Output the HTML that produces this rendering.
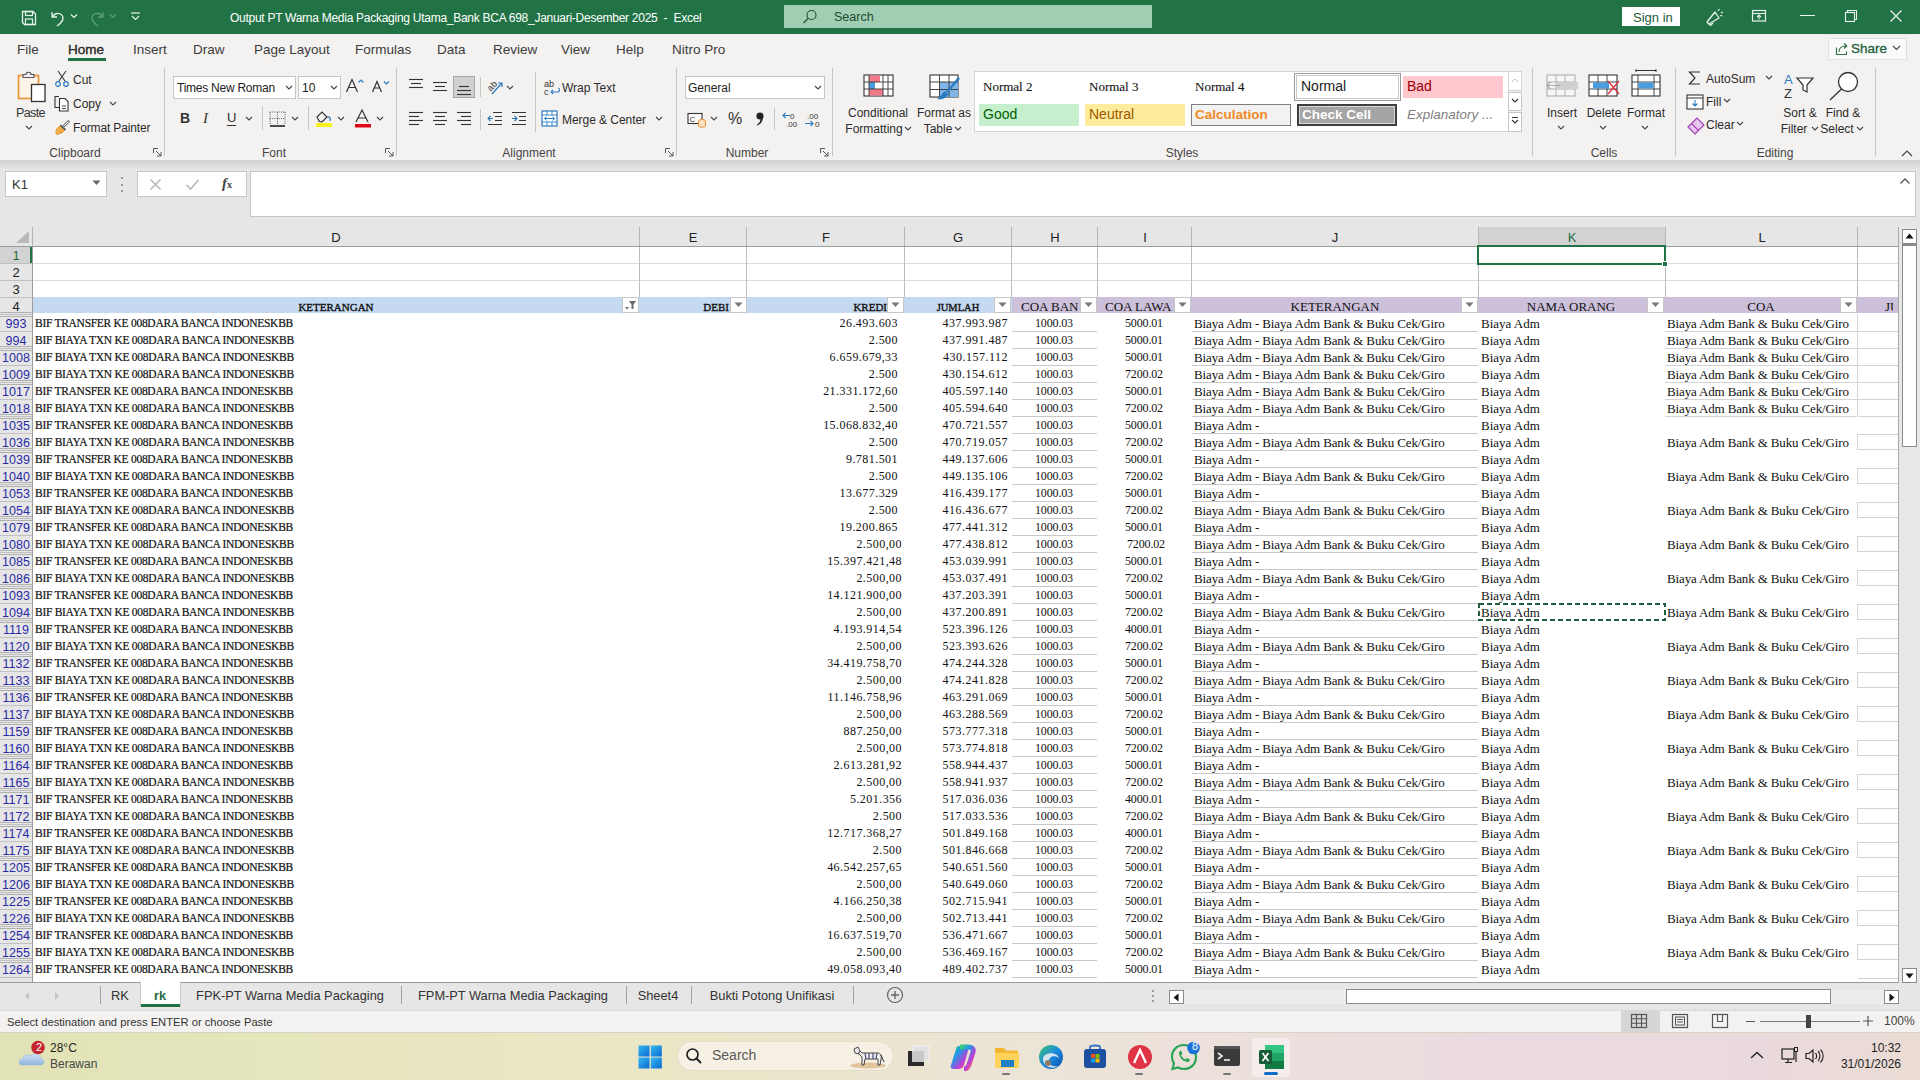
<!DOCTYPE html><html><head><meta charset="utf-8"><style>
*{margin:0;padding:0;box-sizing:border-box}
html,body{width:1920px;height:1080px;overflow:hidden;background:#fff;position:relative}
body{font-family:"Liberation Sans",sans-serif;color:#262626}
.ui{font-family:"Liberation Sans",sans-serif;font-size:14px;line-height:16px;color:#333}
.sm{font-family:"Liberation Sans",sans-serif;font-size:13px;line-height:15px;color:#333}
.ser{font-family:"Liberation Serif",serif;font-size:13px;line-height:15px;color:#000}
</style></head><body><div style="position:absolute;left:0px;top:0px;width:1920px;height:34px;background:#217346"></div>
<div style="position:absolute;left:0px;top:34px;width:1920px;height:126px;background:#f4f2f1"></div>
<div style="position:absolute;left:0px;top:160px;width:1920px;height:67px;background:#e6e6e6"></div>
<div style="position:absolute;left:0px;top:227px;width:1920px;height:20px;background:#e6e6e6"></div>
<div style="position:absolute;left:0px;top:247px;width:1898px;height:736px;background:#fff"></div>
<div style="position:absolute;left:0px;top:982px;width:1920px;height:28px;background:#f0f0f0"></div>
<div style="position:absolute;left:0px;top:1010px;width:1920px;height:23px;background:#f3f2f1"></div>
<div style="position:absolute;left:0px;top:1032px;width:1920px;height:48px;background:linear-gradient(90deg,#e1e3b6 0%,#e6e6bd 15%,#ebe6c6 35%,#ece4d8 55%,#ebdae0 78%,#ead9dc 92%,#eadcd4 100%)"></div>
<div style="position:absolute;left:639px;top:227px;width:1px;height:20px;background:#b6b6b6"></div>
<div style="position:absolute;left:36px;width:600px;text-align:center;top:230px;white-space:nowrap;font-size:13px;line-height:16px;color:#222">D</div>
<div style="position:absolute;left:746px;top:227px;width:1px;height:20px;background:#b6b6b6"></div>
<div style="position:absolute;left:393px;width:600px;text-align:center;top:230px;white-space:nowrap;font-size:13px;line-height:16px;color:#222">E</div>
<div style="position:absolute;left:904px;top:227px;width:1px;height:20px;background:#b6b6b6"></div>
<div style="position:absolute;left:526px;width:600px;text-align:center;top:230px;white-space:nowrap;font-size:13px;line-height:16px;color:#222">F</div>
<div style="position:absolute;left:1011px;top:227px;width:1px;height:20px;background:#b6b6b6"></div>
<div style="position:absolute;left:658px;width:600px;text-align:center;top:230px;white-space:nowrap;font-size:13px;line-height:16px;color:#222">G</div>
<div style="position:absolute;left:1097px;top:227px;width:1px;height:20px;background:#b6b6b6"></div>
<div style="position:absolute;left:755px;width:600px;text-align:center;top:230px;white-space:nowrap;font-size:13px;line-height:16px;color:#222">H</div>
<div style="position:absolute;left:1191px;top:227px;width:1px;height:20px;background:#b6b6b6"></div>
<div style="position:absolute;left:845px;width:600px;text-align:center;top:230px;white-space:nowrap;font-size:13px;line-height:16px;color:#222">I</div>
<div style="position:absolute;left:1478px;top:227px;width:1px;height:20px;background:#b6b6b6"></div>
<div style="position:absolute;left:1035px;width:600px;text-align:center;top:230px;white-space:nowrap;font-size:13px;line-height:16px;color:#222">J</div>
<div style="position:absolute;left:1665px;top:227px;width:1px;height:20px;background:#b6b6b6"></div>
<div style="position:absolute;left:1479px;top:227px;width:186px;height:19px;background:#d2d2d2"></div>
<div style="position:absolute;left:1272px;width:600px;text-align:center;top:230px;white-space:nowrap;font-size:13px;line-height:16px;color:#1e6b41">K</div>
<div style="position:absolute;left:1857px;top:227px;width:1px;height:20px;background:#b6b6b6"></div>
<div style="position:absolute;left:1462px;width:600px;text-align:center;top:230px;white-space:nowrap;font-size:13px;line-height:16px;color:#222">L</div>
<div style="position:absolute;left:1898px;top:227px;width:1px;height:20px;background:#b6b6b6"></div>
<svg style="position:absolute;left:14px;top:230px;" width="16" height="14" viewBox="0 0 16 14"><path d="M15 1 L15 13 L2 13 Z" fill="#b9b9b9"/></svg>
<div style="position:absolute;left:32px;top:227px;width:1px;height:20px;background:#b6b6b6"></div>
<div style="position:absolute;left:0px;top:246px;width:1898px;height:1px;background:#9c9c9c"></div>
<div style="position:absolute;left:1478px;top:245px;width:187px;height:2px;background:#217346"></div>
<div style="position:absolute;left:0px;top:247px;width:32px;height:736px;background:#e6e6e6"></div>
<div style="position:absolute;left:32px;top:247px;width:1px;height:736px;background:#9c9c9c"></div>
<div style="position:absolute;left:0px;top:247px;width:32px;height:16px;background:#d2d2d2"></div>
<div style="position:absolute;left:30px;top:247px;width:2px;height:17px;background:#217346"></div>
<div style="position:absolute;left:0px;top:263px;width:32px;height:1px;background:#c0c0c0"></div>
<div style="position:absolute;left:-284px;width:600px;text-align:center;top:248px;white-space:nowrap;font-size:13px;line-height:16px;color:#1e6b41">1</div>
<div style="position:absolute;left:33px;top:263px;width:1865px;height:1px;background:#dadcdd"></div>
<div style="position:absolute;left:0px;top:280px;width:32px;height:1px;background:#c0c0c0"></div>
<div style="position:absolute;left:-284px;width:600px;text-align:center;top:265px;white-space:nowrap;font-size:13px;line-height:16px;color:#222">2</div>
<div style="position:absolute;left:33px;top:280px;width:1865px;height:1px;background:#dadcdd"></div>
<div style="position:absolute;left:0px;top:297px;width:32px;height:1px;background:#c0c0c0"></div>
<div style="position:absolute;left:-284px;width:600px;text-align:center;top:282px;white-space:nowrap;font-size:13px;line-height:16px;color:#222">3</div>
<div style="position:absolute;left:33px;top:297px;width:1865px;height:1px;background:#dadcdd"></div>
<div style="position:absolute;left:0px;top:314px;width:32px;height:1px;background:#c0c0c0"></div>
<div style="position:absolute;left:-284px;width:600px;text-align:center;top:299px;white-space:nowrap;font-size:13px;line-height:16px;color:#222">4</div>
<div style="position:absolute;left:639px;top:247px;width:1px;height:50px;background:#bcbcbc"></div>
<div style="position:absolute;left:746px;top:247px;width:1px;height:50px;background:#bcbcbc"></div>
<div style="position:absolute;left:904px;top:247px;width:1px;height:50px;background:#bcbcbc"></div>
<div style="position:absolute;left:1011px;top:247px;width:1px;height:50px;background:#bcbcbc"></div>
<div style="position:absolute;left:1097px;top:247px;width:1px;height:50px;background:#bcbcbc"></div>
<div style="position:absolute;left:1191px;top:247px;width:1px;height:50px;background:#bcbcbc"></div>
<div style="position:absolute;left:1478px;top:247px;width:1px;height:50px;background:#bcbcbc"></div>
<div style="position:absolute;left:1665px;top:247px;width:1px;height:50px;background:#bcbcbc"></div>
<div style="position:absolute;left:1857px;top:247px;width:1px;height:50px;background:#bcbcbc"></div>
<div style="position:absolute;left:1898px;top:247px;width:1px;height:50px;background:#bcbcbc"></div>
<div style="position:absolute;left:33px;top:297px;width:872px;height:16px;background:#c5d9f1"></div>
<div style="position:absolute;left:905px;top:297px;width:993px;height:16px;background:#ccc0da"></div>
<div style="position:absolute;left:905px;top:297px;width:106px;height:16px;background:#c5d9f1"></div>
<div style="position:absolute;left:33px;top:297px;width:979px;height:16px;background:#c5d9f1"></div>
<div style="position:absolute;left:1012px;top:297px;width:886px;height:16px;background:#ccc0da"></div>
<div style="position:absolute;left:0px;top:312px;width:32px;height:1px;background:#b0b0b0"></div>
<div style="position:absolute;left:0px;top:316px;width:32px;height:1px;background:#b0b0b0"></div>
<div style="position:absolute;left:0px;top:331px;width:32px;height:1px;background:#c0c0c0"></div>
<div style="position:absolute;left:-284px;width:600px;text-align:center;top:316px;white-space:nowrap;font-size:12.5px;line-height:16px;color:#2a2aa8">993</div>
<div style="position:absolute;left:35px;top:316px;white-space:nowrap;font-family:'Liberation Serif',serif;font-size:12px;line-height:15px;color:#111;font-size:11.5px;letter-spacing:-0.28px;-webkit-text-stroke:0.2px #111">BIF TRANSFER KE 008DARA BANCA INDONESKBB</div>
<div style="position:absolute;left:298px;width:600px;text-align:right;top:316px;white-space:nowrap;font-family:'Liberation Serif',serif;font-size:12px;line-height:15px;color:#111;letter-spacing:0.45px">26.493.603</div>
<div style="position:absolute;left:408px;width:600px;text-align:right;top:316px;white-space:nowrap;font-family:'Liberation Serif',serif;font-size:12px;line-height:15px;color:#111;letter-spacing:0.5px">437.993.987</div>
<div style="position:absolute;left:754px;width:600px;text-align:center;top:316px;white-space:nowrap;font-family:'Liberation Serif',serif;font-size:13px;line-height:15px;color:#111;font-size:12px;letter-spacing:-0.15px">1000.03</div>
<div style="position:absolute;left:844px;width:600px;text-align:center;top:316px;white-space:nowrap;font-family:'Liberation Serif',serif;font-size:13px;line-height:15px;color:#111;font-size:12px;letter-spacing:-0.15px">5000.01</div>
<div style="position:absolute;left:1194px;top:316px;white-space:nowrap;font-family:'Liberation Serif',serif;font-size:13px;line-height:15px;color:#111;letter-spacing:-0.12px">Biaya Adm - Biaya Adm Bank &amp; Buku Cek/Giro</div>
<div style="position:absolute;left:1481px;top:316px;white-space:nowrap;font-family:'Liberation Serif',serif;font-size:13px;line-height:15px;color:#111;">Biaya Adm</div>
<div style="position:absolute;left:1667px;top:316px;white-space:nowrap;font-family:'Liberation Serif',serif;font-size:13px;line-height:15px;color:#111;letter-spacing:-0.14px">Biaya Adm Bank &amp; Buku Cek/Giro</div>
<div style="position:absolute;left:1012px;top:331px;width:85px;height:1px;background:#c8c8c8"></div>
<div style="position:absolute;left:1192px;top:331px;width:286px;height:1px;background:#c8c8c8"></div>
<div style="position:absolute;left:1665px;top:331px;width:192px;height:1px;background:#d4d4d4"></div>
<div style="position:absolute;left:1857px;top:314px;width:1px;height:17px;background:#d4d4d4"></div>
<div style="position:absolute;left:1858px;top:331px;width:40px;height:1px;background:#d4d4d4"></div>
<div style="position:absolute;left:0px;top:348px;width:32px;height:1px;background:#c0c0c0"></div>
<div style="position:absolute;left:-284px;width:600px;text-align:center;top:333px;white-space:nowrap;font-size:12.5px;line-height:16px;color:#2a2aa8">994</div>
<div style="position:absolute;left:35px;top:333px;white-space:nowrap;font-family:'Liberation Serif',serif;font-size:12px;line-height:15px;color:#111;font-size:11.5px;letter-spacing:-0.28px;-webkit-text-stroke:0.2px #111">BIF BIAYA TXN KE 008DARA BANCA INDONESKBB</div>
<div style="position:absolute;left:298px;width:600px;text-align:right;top:333px;white-space:nowrap;font-family:'Liberation Serif',serif;font-size:12px;line-height:15px;color:#111;letter-spacing:0.45px">2.500</div>
<div style="position:absolute;left:408px;width:600px;text-align:right;top:333px;white-space:nowrap;font-family:'Liberation Serif',serif;font-size:12px;line-height:15px;color:#111;letter-spacing:0.5px">437.991.487</div>
<div style="position:absolute;left:754px;width:600px;text-align:center;top:333px;white-space:nowrap;font-family:'Liberation Serif',serif;font-size:13px;line-height:15px;color:#111;font-size:12px;letter-spacing:-0.15px">1000.03</div>
<div style="position:absolute;left:844px;width:600px;text-align:center;top:333px;white-space:nowrap;font-family:'Liberation Serif',serif;font-size:13px;line-height:15px;color:#111;font-size:12px;letter-spacing:-0.15px">5000.01</div>
<div style="position:absolute;left:1194px;top:333px;white-space:nowrap;font-family:'Liberation Serif',serif;font-size:13px;line-height:15px;color:#111;letter-spacing:-0.12px">Biaya Adm - Biaya Adm Bank &amp; Buku Cek/Giro</div>
<div style="position:absolute;left:1481px;top:333px;white-space:nowrap;font-family:'Liberation Serif',serif;font-size:13px;line-height:15px;color:#111;">Biaya Adm</div>
<div style="position:absolute;left:1667px;top:333px;white-space:nowrap;font-family:'Liberation Serif',serif;font-size:13px;line-height:15px;color:#111;letter-spacing:-0.14px">Biaya Adm Bank &amp; Buku Cek/Giro</div>
<div style="position:absolute;left:1012px;top:348px;width:85px;height:1px;background:#c8c8c8"></div>
<div style="position:absolute;left:1192px;top:348px;width:286px;height:1px;background:#c8c8c8"></div>
<div style="position:absolute;left:1665px;top:348px;width:192px;height:1px;background:#d4d4d4"></div>
<div style="position:absolute;left:1857px;top:331px;width:1px;height:17px;background:#d4d4d4"></div>
<div style="position:absolute;left:1858px;top:348px;width:40px;height:1px;background:#d4d4d4"></div>
<div style="position:absolute;left:0px;top:346px;width:32px;height:1px;background:#b0b0b0"></div>
<div style="position:absolute;left:0px;top:350px;width:32px;height:1px;background:#b0b0b0"></div>
<div style="position:absolute;left:0px;top:365px;width:32px;height:1px;background:#c0c0c0"></div>
<div style="position:absolute;left:-284px;width:600px;text-align:center;top:350px;white-space:nowrap;font-size:12.5px;line-height:16px;color:#2a2aa8">1008</div>
<div style="position:absolute;left:35px;top:350px;white-space:nowrap;font-family:'Liberation Serif',serif;font-size:12px;line-height:15px;color:#111;font-size:11.5px;letter-spacing:-0.28px;-webkit-text-stroke:0.2px #111">BIF BIAYA TXN KE 008DARA BANCA INDONESKBB</div>
<div style="position:absolute;left:298px;width:600px;text-align:right;top:350px;white-space:nowrap;font-family:'Liberation Serif',serif;font-size:12px;line-height:15px;color:#111;letter-spacing:0.45px">6.659.679,33</div>
<div style="position:absolute;left:408px;width:600px;text-align:right;top:350px;white-space:nowrap;font-family:'Liberation Serif',serif;font-size:12px;line-height:15px;color:#111;letter-spacing:0.5px">430.157.112</div>
<div style="position:absolute;left:754px;width:600px;text-align:center;top:350px;white-space:nowrap;font-family:'Liberation Serif',serif;font-size:13px;line-height:15px;color:#111;font-size:12px;letter-spacing:-0.15px">1000.03</div>
<div style="position:absolute;left:844px;width:600px;text-align:center;top:350px;white-space:nowrap;font-family:'Liberation Serif',serif;font-size:13px;line-height:15px;color:#111;font-size:12px;letter-spacing:-0.15px">5000.01</div>
<div style="position:absolute;left:1194px;top:350px;white-space:nowrap;font-family:'Liberation Serif',serif;font-size:13px;line-height:15px;color:#111;letter-spacing:-0.12px">Biaya Adm - Biaya Adm Bank &amp; Buku Cek/Giro</div>
<div style="position:absolute;left:1481px;top:350px;white-space:nowrap;font-family:'Liberation Serif',serif;font-size:13px;line-height:15px;color:#111;">Biaya Adm</div>
<div style="position:absolute;left:1667px;top:350px;white-space:nowrap;font-family:'Liberation Serif',serif;font-size:13px;line-height:15px;color:#111;letter-spacing:-0.14px">Biaya Adm Bank &amp; Buku Cek/Giro</div>
<div style="position:absolute;left:1012px;top:365px;width:85px;height:1px;background:#c8c8c8"></div>
<div style="position:absolute;left:1192px;top:365px;width:286px;height:1px;background:#c8c8c8"></div>
<div style="position:absolute;left:1665px;top:365px;width:192px;height:1px;background:#d4d4d4"></div>
<div style="position:absolute;left:1857px;top:348px;width:1px;height:17px;background:#d4d4d4"></div>
<div style="position:absolute;left:1858px;top:365px;width:40px;height:1px;background:#d4d4d4"></div>
<div style="position:absolute;left:0px;top:382px;width:32px;height:1px;background:#c0c0c0"></div>
<div style="position:absolute;left:-284px;width:600px;text-align:center;top:367px;white-space:nowrap;font-size:12.5px;line-height:16px;color:#2a2aa8">1009</div>
<div style="position:absolute;left:35px;top:367px;white-space:nowrap;font-family:'Liberation Serif',serif;font-size:12px;line-height:15px;color:#111;font-size:11.5px;letter-spacing:-0.28px;-webkit-text-stroke:0.2px #111">BIF BIAYA TXN KE 008DARA BANCA INDONESKBB</div>
<div style="position:absolute;left:298px;width:600px;text-align:right;top:367px;white-space:nowrap;font-family:'Liberation Serif',serif;font-size:12px;line-height:15px;color:#111;letter-spacing:0.45px">2.500</div>
<div style="position:absolute;left:408px;width:600px;text-align:right;top:367px;white-space:nowrap;font-family:'Liberation Serif',serif;font-size:12px;line-height:15px;color:#111;letter-spacing:0.5px">430.154.612</div>
<div style="position:absolute;left:754px;width:600px;text-align:center;top:367px;white-space:nowrap;font-family:'Liberation Serif',serif;font-size:13px;line-height:15px;color:#111;font-size:12px;letter-spacing:-0.15px">1000.03</div>
<div style="position:absolute;left:844px;width:600px;text-align:center;top:367px;white-space:nowrap;font-family:'Liberation Serif',serif;font-size:13px;line-height:15px;color:#111;font-size:12px;letter-spacing:-0.15px">7200.02</div>
<div style="position:absolute;left:1194px;top:367px;white-space:nowrap;font-family:'Liberation Serif',serif;font-size:13px;line-height:15px;color:#111;letter-spacing:-0.12px">Biaya Adm - Biaya Adm Bank &amp; Buku Cek/Giro</div>
<div style="position:absolute;left:1481px;top:367px;white-space:nowrap;font-family:'Liberation Serif',serif;font-size:13px;line-height:15px;color:#111;">Biaya Adm</div>
<div style="position:absolute;left:1667px;top:367px;white-space:nowrap;font-family:'Liberation Serif',serif;font-size:13px;line-height:15px;color:#111;letter-spacing:-0.14px">Biaya Adm Bank &amp; Buku Cek/Giro</div>
<div style="position:absolute;left:1012px;top:382px;width:85px;height:1px;background:#c8c8c8"></div>
<div style="position:absolute;left:1192px;top:382px;width:286px;height:1px;background:#c8c8c8"></div>
<div style="position:absolute;left:1665px;top:382px;width:192px;height:1px;background:#d4d4d4"></div>
<div style="position:absolute;left:1857px;top:365px;width:1px;height:17px;background:#d4d4d4"></div>
<div style="position:absolute;left:1858px;top:382px;width:40px;height:1px;background:#d4d4d4"></div>
<div style="position:absolute;left:0px;top:380px;width:32px;height:1px;background:#b0b0b0"></div>
<div style="position:absolute;left:0px;top:384px;width:32px;height:1px;background:#b0b0b0"></div>
<div style="position:absolute;left:0px;top:399px;width:32px;height:1px;background:#c0c0c0"></div>
<div style="position:absolute;left:-284px;width:600px;text-align:center;top:384px;white-space:nowrap;font-size:12.5px;line-height:16px;color:#2a2aa8">1017</div>
<div style="position:absolute;left:35px;top:384px;white-space:nowrap;font-family:'Liberation Serif',serif;font-size:12px;line-height:15px;color:#111;font-size:11.5px;letter-spacing:-0.28px;-webkit-text-stroke:0.2px #111">BIF TRANSFER KE 008DARA BANCA INDONESKBB</div>
<div style="position:absolute;left:298px;width:600px;text-align:right;top:384px;white-space:nowrap;font-family:'Liberation Serif',serif;font-size:12px;line-height:15px;color:#111;letter-spacing:0.45px">21.331.172,60</div>
<div style="position:absolute;left:408px;width:600px;text-align:right;top:384px;white-space:nowrap;font-family:'Liberation Serif',serif;font-size:12px;line-height:15px;color:#111;letter-spacing:0.5px">405.597.140</div>
<div style="position:absolute;left:754px;width:600px;text-align:center;top:384px;white-space:nowrap;font-family:'Liberation Serif',serif;font-size:13px;line-height:15px;color:#111;font-size:12px;letter-spacing:-0.15px">1000.03</div>
<div style="position:absolute;left:844px;width:600px;text-align:center;top:384px;white-space:nowrap;font-family:'Liberation Serif',serif;font-size:13px;line-height:15px;color:#111;font-size:12px;letter-spacing:-0.15px">5000.01</div>
<div style="position:absolute;left:1194px;top:384px;white-space:nowrap;font-family:'Liberation Serif',serif;font-size:13px;line-height:15px;color:#111;letter-spacing:-0.12px">Biaya Adm - Biaya Adm Bank &amp; Buku Cek/Giro</div>
<div style="position:absolute;left:1481px;top:384px;white-space:nowrap;font-family:'Liberation Serif',serif;font-size:13px;line-height:15px;color:#111;">Biaya Adm</div>
<div style="position:absolute;left:1667px;top:384px;white-space:nowrap;font-family:'Liberation Serif',serif;font-size:13px;line-height:15px;color:#111;letter-spacing:-0.14px">Biaya Adm Bank &amp; Buku Cek/Giro</div>
<div style="position:absolute;left:1012px;top:399px;width:85px;height:1px;background:#c8c8c8"></div>
<div style="position:absolute;left:1192px;top:399px;width:286px;height:1px;background:#c8c8c8"></div>
<div style="position:absolute;left:1665px;top:399px;width:192px;height:1px;background:#d4d4d4"></div>
<div style="position:absolute;left:1857px;top:382px;width:1px;height:17px;background:#d4d4d4"></div>
<div style="position:absolute;left:1858px;top:399px;width:40px;height:1px;background:#d4d4d4"></div>
<div style="position:absolute;left:0px;top:416px;width:32px;height:1px;background:#c0c0c0"></div>
<div style="position:absolute;left:-284px;width:600px;text-align:center;top:401px;white-space:nowrap;font-size:12.5px;line-height:16px;color:#2a2aa8">1018</div>
<div style="position:absolute;left:35px;top:401px;white-space:nowrap;font-family:'Liberation Serif',serif;font-size:12px;line-height:15px;color:#111;font-size:11.5px;letter-spacing:-0.28px;-webkit-text-stroke:0.2px #111">BIF BIAYA TXN KE 008DARA BANCA INDONESKBB</div>
<div style="position:absolute;left:298px;width:600px;text-align:right;top:401px;white-space:nowrap;font-family:'Liberation Serif',serif;font-size:12px;line-height:15px;color:#111;letter-spacing:0.45px">2.500</div>
<div style="position:absolute;left:408px;width:600px;text-align:right;top:401px;white-space:nowrap;font-family:'Liberation Serif',serif;font-size:12px;line-height:15px;color:#111;letter-spacing:0.5px">405.594.640</div>
<div style="position:absolute;left:754px;width:600px;text-align:center;top:401px;white-space:nowrap;font-family:'Liberation Serif',serif;font-size:13px;line-height:15px;color:#111;font-size:12px;letter-spacing:-0.15px">1000.03</div>
<div style="position:absolute;left:844px;width:600px;text-align:center;top:401px;white-space:nowrap;font-family:'Liberation Serif',serif;font-size:13px;line-height:15px;color:#111;font-size:12px;letter-spacing:-0.15px">7200.02</div>
<div style="position:absolute;left:1194px;top:401px;white-space:nowrap;font-family:'Liberation Serif',serif;font-size:13px;line-height:15px;color:#111;letter-spacing:-0.12px">Biaya Adm - Biaya Adm Bank &amp; Buku Cek/Giro</div>
<div style="position:absolute;left:1481px;top:401px;white-space:nowrap;font-family:'Liberation Serif',serif;font-size:13px;line-height:15px;color:#111;">Biaya Adm</div>
<div style="position:absolute;left:1667px;top:401px;white-space:nowrap;font-family:'Liberation Serif',serif;font-size:13px;line-height:15px;color:#111;letter-spacing:-0.14px">Biaya Adm Bank &amp; Buku Cek/Giro</div>
<div style="position:absolute;left:1012px;top:416px;width:85px;height:1px;background:#c8c8c8"></div>
<div style="position:absolute;left:1192px;top:416px;width:286px;height:1px;background:#c8c8c8"></div>
<div style="position:absolute;left:1665px;top:416px;width:192px;height:1px;background:#d4d4d4"></div>
<div style="position:absolute;left:1857px;top:399px;width:1px;height:17px;background:#d4d4d4"></div>
<div style="position:absolute;left:1858px;top:416px;width:40px;height:1px;background:#d4d4d4"></div>
<div style="position:absolute;left:0px;top:414px;width:32px;height:1px;background:#b0b0b0"></div>
<div style="position:absolute;left:0px;top:418px;width:32px;height:1px;background:#b0b0b0"></div>
<div style="position:absolute;left:0px;top:433px;width:32px;height:1px;background:#c0c0c0"></div>
<div style="position:absolute;left:-284px;width:600px;text-align:center;top:418px;white-space:nowrap;font-size:12.5px;line-height:16px;color:#2a2aa8">1035</div>
<div style="position:absolute;left:35px;top:418px;white-space:nowrap;font-family:'Liberation Serif',serif;font-size:12px;line-height:15px;color:#111;font-size:11.5px;letter-spacing:-0.28px;-webkit-text-stroke:0.2px #111">BIF TRANSFER KE 008DARA BANCA INDONESKBB</div>
<div style="position:absolute;left:298px;width:600px;text-align:right;top:418px;white-space:nowrap;font-family:'Liberation Serif',serif;font-size:12px;line-height:15px;color:#111;letter-spacing:0.45px">15.068.832,40</div>
<div style="position:absolute;left:408px;width:600px;text-align:right;top:418px;white-space:nowrap;font-family:'Liberation Serif',serif;font-size:12px;line-height:15px;color:#111;letter-spacing:0.5px">470.721.557</div>
<div style="position:absolute;left:754px;width:600px;text-align:center;top:418px;white-space:nowrap;font-family:'Liberation Serif',serif;font-size:13px;line-height:15px;color:#111;font-size:12px;letter-spacing:-0.15px">1000.03</div>
<div style="position:absolute;left:844px;width:600px;text-align:center;top:418px;white-space:nowrap;font-family:'Liberation Serif',serif;font-size:13px;line-height:15px;color:#111;font-size:12px;letter-spacing:-0.15px">5000.01</div>
<div style="position:absolute;left:1194px;top:418px;white-space:nowrap;font-family:'Liberation Serif',serif;font-size:13px;line-height:15px;color:#111;letter-spacing:-0.12px">Biaya Adm -</div>
<div style="position:absolute;left:1481px;top:418px;white-space:nowrap;font-family:'Liberation Serif',serif;font-size:13px;line-height:15px;color:#111;">Biaya Adm</div>
<div style="position:absolute;left:1012px;top:433px;width:85px;height:1px;background:#c8c8c8"></div>
<div style="position:absolute;left:1192px;top:433px;width:286px;height:1px;background:#c8c8c8"></div>
<div style="position:absolute;left:0px;top:450px;width:32px;height:1px;background:#c0c0c0"></div>
<div style="position:absolute;left:-284px;width:600px;text-align:center;top:435px;white-space:nowrap;font-size:12.5px;line-height:16px;color:#2a2aa8">1036</div>
<div style="position:absolute;left:35px;top:435px;white-space:nowrap;font-family:'Liberation Serif',serif;font-size:12px;line-height:15px;color:#111;font-size:11.5px;letter-spacing:-0.28px;-webkit-text-stroke:0.2px #111">BIF BIAYA TXN KE 008DARA BANCA INDONESKBB</div>
<div style="position:absolute;left:298px;width:600px;text-align:right;top:435px;white-space:nowrap;font-family:'Liberation Serif',serif;font-size:12px;line-height:15px;color:#111;letter-spacing:0.45px">2.500</div>
<div style="position:absolute;left:408px;width:600px;text-align:right;top:435px;white-space:nowrap;font-family:'Liberation Serif',serif;font-size:12px;line-height:15px;color:#111;letter-spacing:0.5px">470.719.057</div>
<div style="position:absolute;left:754px;width:600px;text-align:center;top:435px;white-space:nowrap;font-family:'Liberation Serif',serif;font-size:13px;line-height:15px;color:#111;font-size:12px;letter-spacing:-0.15px">1000.03</div>
<div style="position:absolute;left:844px;width:600px;text-align:center;top:435px;white-space:nowrap;font-family:'Liberation Serif',serif;font-size:13px;line-height:15px;color:#111;font-size:12px;letter-spacing:-0.15px">7200.02</div>
<div style="position:absolute;left:1194px;top:435px;white-space:nowrap;font-family:'Liberation Serif',serif;font-size:13px;line-height:15px;color:#111;letter-spacing:-0.12px">Biaya Adm - Biaya Adm Bank &amp; Buku Cek/Giro</div>
<div style="position:absolute;left:1481px;top:435px;white-space:nowrap;font-family:'Liberation Serif',serif;font-size:13px;line-height:15px;color:#111;">Biaya Adm</div>
<div style="position:absolute;left:1667px;top:435px;white-space:nowrap;font-family:'Liberation Serif',serif;font-size:13px;line-height:15px;color:#111;letter-spacing:-0.14px">Biaya Adm Bank &amp; Buku Cek/Giro</div>
<div style="position:absolute;left:1012px;top:450px;width:85px;height:1px;background:#c8c8c8"></div>
<div style="position:absolute;left:1192px;top:450px;width:286px;height:1px;background:#c8c8c8"></div>
<div style="position:absolute;left:1857px;top:434px;width:41px;height:16px;border:1px solid #d4d4d4;border-right:none"></div>
<div style="position:absolute;left:0px;top:448px;width:32px;height:1px;background:#b0b0b0"></div>
<div style="position:absolute;left:0px;top:452px;width:32px;height:1px;background:#b0b0b0"></div>
<div style="position:absolute;left:0px;top:467px;width:32px;height:1px;background:#c0c0c0"></div>
<div style="position:absolute;left:-284px;width:600px;text-align:center;top:452px;white-space:nowrap;font-size:12.5px;line-height:16px;color:#2a2aa8">1039</div>
<div style="position:absolute;left:35px;top:452px;white-space:nowrap;font-family:'Liberation Serif',serif;font-size:12px;line-height:15px;color:#111;font-size:11.5px;letter-spacing:-0.28px;-webkit-text-stroke:0.2px #111">BIF TRANSFER KE 008DARA BANCA INDONESKBB</div>
<div style="position:absolute;left:298px;width:600px;text-align:right;top:452px;white-space:nowrap;font-family:'Liberation Serif',serif;font-size:12px;line-height:15px;color:#111;letter-spacing:0.45px">9.781.501</div>
<div style="position:absolute;left:408px;width:600px;text-align:right;top:452px;white-space:nowrap;font-family:'Liberation Serif',serif;font-size:12px;line-height:15px;color:#111;letter-spacing:0.5px">449.137.606</div>
<div style="position:absolute;left:754px;width:600px;text-align:center;top:452px;white-space:nowrap;font-family:'Liberation Serif',serif;font-size:13px;line-height:15px;color:#111;font-size:12px;letter-spacing:-0.15px">1000.03</div>
<div style="position:absolute;left:844px;width:600px;text-align:center;top:452px;white-space:nowrap;font-family:'Liberation Serif',serif;font-size:13px;line-height:15px;color:#111;font-size:12px;letter-spacing:-0.15px">5000.01</div>
<div style="position:absolute;left:1194px;top:452px;white-space:nowrap;font-family:'Liberation Serif',serif;font-size:13px;line-height:15px;color:#111;letter-spacing:-0.12px">Biaya Adm -</div>
<div style="position:absolute;left:1481px;top:452px;white-space:nowrap;font-family:'Liberation Serif',serif;font-size:13px;line-height:15px;color:#111;">Biaya Adm</div>
<div style="position:absolute;left:1012px;top:467px;width:85px;height:1px;background:#c8c8c8"></div>
<div style="position:absolute;left:1192px;top:467px;width:286px;height:1px;background:#c8c8c8"></div>
<div style="position:absolute;left:0px;top:484px;width:32px;height:1px;background:#c0c0c0"></div>
<div style="position:absolute;left:-284px;width:600px;text-align:center;top:469px;white-space:nowrap;font-size:12.5px;line-height:16px;color:#2a2aa8">1040</div>
<div style="position:absolute;left:35px;top:469px;white-space:nowrap;font-family:'Liberation Serif',serif;font-size:12px;line-height:15px;color:#111;font-size:11.5px;letter-spacing:-0.28px;-webkit-text-stroke:0.2px #111">BIF BIAYA TXN KE 008DARA BANCA INDONESKBB</div>
<div style="position:absolute;left:298px;width:600px;text-align:right;top:469px;white-space:nowrap;font-family:'Liberation Serif',serif;font-size:12px;line-height:15px;color:#111;letter-spacing:0.45px">2.500</div>
<div style="position:absolute;left:408px;width:600px;text-align:right;top:469px;white-space:nowrap;font-family:'Liberation Serif',serif;font-size:12px;line-height:15px;color:#111;letter-spacing:0.5px">449.135.106</div>
<div style="position:absolute;left:754px;width:600px;text-align:center;top:469px;white-space:nowrap;font-family:'Liberation Serif',serif;font-size:13px;line-height:15px;color:#111;font-size:12px;letter-spacing:-0.15px">1000.03</div>
<div style="position:absolute;left:844px;width:600px;text-align:center;top:469px;white-space:nowrap;font-family:'Liberation Serif',serif;font-size:13px;line-height:15px;color:#111;font-size:12px;letter-spacing:-0.15px">7200.02</div>
<div style="position:absolute;left:1194px;top:469px;white-space:nowrap;font-family:'Liberation Serif',serif;font-size:13px;line-height:15px;color:#111;letter-spacing:-0.12px">Biaya Adm - Biaya Adm Bank &amp; Buku Cek/Giro</div>
<div style="position:absolute;left:1481px;top:469px;white-space:nowrap;font-family:'Liberation Serif',serif;font-size:13px;line-height:15px;color:#111;">Biaya Adm</div>
<div style="position:absolute;left:1667px;top:469px;white-space:nowrap;font-family:'Liberation Serif',serif;font-size:13px;line-height:15px;color:#111;letter-spacing:-0.14px">Biaya Adm Bank &amp; Buku Cek/Giro</div>
<div style="position:absolute;left:1012px;top:484px;width:85px;height:1px;background:#c8c8c8"></div>
<div style="position:absolute;left:1192px;top:484px;width:286px;height:1px;background:#c8c8c8"></div>
<div style="position:absolute;left:1857px;top:468px;width:41px;height:16px;border:1px solid #d4d4d4;border-right:none"></div>
<div style="position:absolute;left:0px;top:482px;width:32px;height:1px;background:#b0b0b0"></div>
<div style="position:absolute;left:0px;top:486px;width:32px;height:1px;background:#b0b0b0"></div>
<div style="position:absolute;left:0px;top:501px;width:32px;height:1px;background:#c0c0c0"></div>
<div style="position:absolute;left:-284px;width:600px;text-align:center;top:486px;white-space:nowrap;font-size:12.5px;line-height:16px;color:#2a2aa8">1053</div>
<div style="position:absolute;left:35px;top:486px;white-space:nowrap;font-family:'Liberation Serif',serif;font-size:12px;line-height:15px;color:#111;font-size:11.5px;letter-spacing:-0.28px;-webkit-text-stroke:0.2px #111">BIF TRANSFER KE 008DARA BANCA INDONESKBB</div>
<div style="position:absolute;left:298px;width:600px;text-align:right;top:486px;white-space:nowrap;font-family:'Liberation Serif',serif;font-size:12px;line-height:15px;color:#111;letter-spacing:0.45px">13.677.329</div>
<div style="position:absolute;left:408px;width:600px;text-align:right;top:486px;white-space:nowrap;font-family:'Liberation Serif',serif;font-size:12px;line-height:15px;color:#111;letter-spacing:0.5px">416.439.177</div>
<div style="position:absolute;left:754px;width:600px;text-align:center;top:486px;white-space:nowrap;font-family:'Liberation Serif',serif;font-size:13px;line-height:15px;color:#111;font-size:12px;letter-spacing:-0.15px">1000.03</div>
<div style="position:absolute;left:844px;width:600px;text-align:center;top:486px;white-space:nowrap;font-family:'Liberation Serif',serif;font-size:13px;line-height:15px;color:#111;font-size:12px;letter-spacing:-0.15px">5000.01</div>
<div style="position:absolute;left:1194px;top:486px;white-space:nowrap;font-family:'Liberation Serif',serif;font-size:13px;line-height:15px;color:#111;letter-spacing:-0.12px">Biaya Adm -</div>
<div style="position:absolute;left:1481px;top:486px;white-space:nowrap;font-family:'Liberation Serif',serif;font-size:13px;line-height:15px;color:#111;">Biaya Adm</div>
<div style="position:absolute;left:1012px;top:501px;width:85px;height:1px;background:#c8c8c8"></div>
<div style="position:absolute;left:1192px;top:501px;width:286px;height:1px;background:#c8c8c8"></div>
<div style="position:absolute;left:0px;top:518px;width:32px;height:1px;background:#c0c0c0"></div>
<div style="position:absolute;left:-284px;width:600px;text-align:center;top:503px;white-space:nowrap;font-size:12.5px;line-height:16px;color:#2a2aa8">1054</div>
<div style="position:absolute;left:35px;top:503px;white-space:nowrap;font-family:'Liberation Serif',serif;font-size:12px;line-height:15px;color:#111;font-size:11.5px;letter-spacing:-0.28px;-webkit-text-stroke:0.2px #111">BIF BIAYA TXN KE 008DARA BANCA INDONESKBB</div>
<div style="position:absolute;left:298px;width:600px;text-align:right;top:503px;white-space:nowrap;font-family:'Liberation Serif',serif;font-size:12px;line-height:15px;color:#111;letter-spacing:0.45px">2.500</div>
<div style="position:absolute;left:408px;width:600px;text-align:right;top:503px;white-space:nowrap;font-family:'Liberation Serif',serif;font-size:12px;line-height:15px;color:#111;letter-spacing:0.5px">416.436.677</div>
<div style="position:absolute;left:754px;width:600px;text-align:center;top:503px;white-space:nowrap;font-family:'Liberation Serif',serif;font-size:13px;line-height:15px;color:#111;font-size:12px;letter-spacing:-0.15px">1000.03</div>
<div style="position:absolute;left:844px;width:600px;text-align:center;top:503px;white-space:nowrap;font-family:'Liberation Serif',serif;font-size:13px;line-height:15px;color:#111;font-size:12px;letter-spacing:-0.15px">7200.02</div>
<div style="position:absolute;left:1194px;top:503px;white-space:nowrap;font-family:'Liberation Serif',serif;font-size:13px;line-height:15px;color:#111;letter-spacing:-0.12px">Biaya Adm - Biaya Adm Bank &amp; Buku Cek/Giro</div>
<div style="position:absolute;left:1481px;top:503px;white-space:nowrap;font-family:'Liberation Serif',serif;font-size:13px;line-height:15px;color:#111;">Biaya Adm</div>
<div style="position:absolute;left:1667px;top:503px;white-space:nowrap;font-family:'Liberation Serif',serif;font-size:13px;line-height:15px;color:#111;letter-spacing:-0.14px">Biaya Adm Bank &amp; Buku Cek/Giro</div>
<div style="position:absolute;left:1012px;top:518px;width:85px;height:1px;background:#c8c8c8"></div>
<div style="position:absolute;left:1192px;top:518px;width:286px;height:1px;background:#c8c8c8"></div>
<div style="position:absolute;left:1857px;top:502px;width:41px;height:16px;border:1px solid #d4d4d4;border-right:none"></div>
<div style="position:absolute;left:0px;top:516px;width:32px;height:1px;background:#b0b0b0"></div>
<div style="position:absolute;left:0px;top:520px;width:32px;height:1px;background:#b0b0b0"></div>
<div style="position:absolute;left:0px;top:535px;width:32px;height:1px;background:#c0c0c0"></div>
<div style="position:absolute;left:-284px;width:600px;text-align:center;top:520px;white-space:nowrap;font-size:12.5px;line-height:16px;color:#2a2aa8">1079</div>
<div style="position:absolute;left:35px;top:520px;white-space:nowrap;font-family:'Liberation Serif',serif;font-size:12px;line-height:15px;color:#111;font-size:11.5px;letter-spacing:-0.28px;-webkit-text-stroke:0.2px #111">BIF TRANSFER KE 008DARA BANCA INDONESKBB</div>
<div style="position:absolute;left:298px;width:600px;text-align:right;top:520px;white-space:nowrap;font-family:'Liberation Serif',serif;font-size:12px;line-height:15px;color:#111;letter-spacing:0.45px">19.200.865</div>
<div style="position:absolute;left:408px;width:600px;text-align:right;top:520px;white-space:nowrap;font-family:'Liberation Serif',serif;font-size:12px;line-height:15px;color:#111;letter-spacing:0.5px">477.441.312</div>
<div style="position:absolute;left:754px;width:600px;text-align:center;top:520px;white-space:nowrap;font-family:'Liberation Serif',serif;font-size:13px;line-height:15px;color:#111;font-size:12px;letter-spacing:-0.15px">1000.03</div>
<div style="position:absolute;left:844px;width:600px;text-align:center;top:520px;white-space:nowrap;font-family:'Liberation Serif',serif;font-size:13px;line-height:15px;color:#111;font-size:12px;letter-spacing:-0.15px">5000.01</div>
<div style="position:absolute;left:1194px;top:520px;white-space:nowrap;font-family:'Liberation Serif',serif;font-size:13px;line-height:15px;color:#111;letter-spacing:-0.12px">Biaya Adm -</div>
<div style="position:absolute;left:1481px;top:520px;white-space:nowrap;font-family:'Liberation Serif',serif;font-size:13px;line-height:15px;color:#111;">Biaya Adm</div>
<div style="position:absolute;left:1012px;top:535px;width:85px;height:1px;background:#c8c8c8"></div>
<div style="position:absolute;left:1192px;top:535px;width:286px;height:1px;background:#c8c8c8"></div>
<div style="position:absolute;left:0px;top:552px;width:32px;height:1px;background:#c0c0c0"></div>
<div style="position:absolute;left:-284px;width:600px;text-align:center;top:537px;white-space:nowrap;font-size:12.5px;line-height:16px;color:#2a2aa8">1080</div>
<div style="position:absolute;left:35px;top:537px;white-space:nowrap;font-family:'Liberation Serif',serif;font-size:12px;line-height:15px;color:#111;font-size:11.5px;letter-spacing:-0.28px;-webkit-text-stroke:0.2px #111">BIF BIAYA TXN KE 008DARA BANCA INDONESKBB</div>
<div style="position:absolute;left:302px;width:600px;text-align:right;top:537px;white-space:nowrap;font-family:'Liberation Serif',serif;font-size:12px;line-height:15px;color:#111;letter-spacing:0.45px">2.500,00</div>
<div style="position:absolute;left:408px;width:600px;text-align:right;top:537px;white-space:nowrap;font-family:'Liberation Serif',serif;font-size:12px;line-height:15px;color:#111;letter-spacing:0.5px">477.438.812</div>
<div style="position:absolute;left:754px;width:600px;text-align:center;top:537px;white-space:nowrap;font-family:'Liberation Serif',serif;font-size:13px;line-height:15px;color:#111;font-size:12px;letter-spacing:-0.15px">1000.03</div>
<div style="position:absolute;left:846px;width:600px;text-align:center;top:537px;white-space:nowrap;font-family:'Liberation Serif',serif;font-size:13px;line-height:15px;color:#111;font-size:12px;letter-spacing:-0.15px">7200.02</div>
<div style="position:absolute;left:1194px;top:537px;white-space:nowrap;font-family:'Liberation Serif',serif;font-size:13px;line-height:15px;color:#111;letter-spacing:-0.12px">Biaya Adm - Biaya Adm Bank &amp; Buku Cek/Giro</div>
<div style="position:absolute;left:1481px;top:537px;white-space:nowrap;font-family:'Liberation Serif',serif;font-size:13px;line-height:15px;color:#111;">Biaya Adm</div>
<div style="position:absolute;left:1667px;top:537px;white-space:nowrap;font-family:'Liberation Serif',serif;font-size:13px;line-height:15px;color:#111;letter-spacing:-0.14px">Biaya Adm Bank &amp; Buku Cek/Giro</div>
<div style="position:absolute;left:1012px;top:552px;width:85px;height:1px;background:#c8c8c8"></div>
<div style="position:absolute;left:1192px;top:552px;width:286px;height:1px;background:#c8c8c8"></div>
<div style="position:absolute;left:1857px;top:536px;width:41px;height:16px;border:1px solid #d4d4d4;border-right:none"></div>
<div style="position:absolute;left:0px;top:550px;width:32px;height:1px;background:#b0b0b0"></div>
<div style="position:absolute;left:0px;top:554px;width:32px;height:1px;background:#b0b0b0"></div>
<div style="position:absolute;left:0px;top:569px;width:32px;height:1px;background:#c0c0c0"></div>
<div style="position:absolute;left:-284px;width:600px;text-align:center;top:554px;white-space:nowrap;font-size:12.5px;line-height:16px;color:#2a2aa8">1085</div>
<div style="position:absolute;left:35px;top:554px;white-space:nowrap;font-family:'Liberation Serif',serif;font-size:12px;line-height:15px;color:#111;font-size:11.5px;letter-spacing:-0.28px;-webkit-text-stroke:0.2px #111">BIF TRANSFER KE 008DARA BANCA INDONESKBB</div>
<div style="position:absolute;left:302px;width:600px;text-align:right;top:554px;white-space:nowrap;font-family:'Liberation Serif',serif;font-size:12px;line-height:15px;color:#111;letter-spacing:0.45px">15.397.421,48</div>
<div style="position:absolute;left:408px;width:600px;text-align:right;top:554px;white-space:nowrap;font-family:'Liberation Serif',serif;font-size:12px;line-height:15px;color:#111;letter-spacing:0.5px">453.039.991</div>
<div style="position:absolute;left:754px;width:600px;text-align:center;top:554px;white-space:nowrap;font-family:'Liberation Serif',serif;font-size:13px;line-height:15px;color:#111;font-size:12px;letter-spacing:-0.15px">1000.03</div>
<div style="position:absolute;left:844px;width:600px;text-align:center;top:554px;white-space:nowrap;font-family:'Liberation Serif',serif;font-size:13px;line-height:15px;color:#111;font-size:12px;letter-spacing:-0.15px">5000.01</div>
<div style="position:absolute;left:1194px;top:554px;white-space:nowrap;font-family:'Liberation Serif',serif;font-size:13px;line-height:15px;color:#111;letter-spacing:-0.12px">Biaya Adm -</div>
<div style="position:absolute;left:1481px;top:554px;white-space:nowrap;font-family:'Liberation Serif',serif;font-size:13px;line-height:15px;color:#111;">Biaya Adm</div>
<div style="position:absolute;left:1012px;top:569px;width:85px;height:1px;background:#c8c8c8"></div>
<div style="position:absolute;left:1192px;top:569px;width:286px;height:1px;background:#c8c8c8"></div>
<div style="position:absolute;left:0px;top:586px;width:32px;height:1px;background:#c0c0c0"></div>
<div style="position:absolute;left:-284px;width:600px;text-align:center;top:571px;white-space:nowrap;font-size:12.5px;line-height:16px;color:#2a2aa8">1086</div>
<div style="position:absolute;left:35px;top:571px;white-space:nowrap;font-family:'Liberation Serif',serif;font-size:12px;line-height:15px;color:#111;font-size:11.5px;letter-spacing:-0.28px;-webkit-text-stroke:0.2px #111">BIF BIAYA TXN KE 008DARA BANCA INDONESKBB</div>
<div style="position:absolute;left:302px;width:600px;text-align:right;top:571px;white-space:nowrap;font-family:'Liberation Serif',serif;font-size:12px;line-height:15px;color:#111;letter-spacing:0.45px">2.500,00</div>
<div style="position:absolute;left:408px;width:600px;text-align:right;top:571px;white-space:nowrap;font-family:'Liberation Serif',serif;font-size:12px;line-height:15px;color:#111;letter-spacing:0.5px">453.037.491</div>
<div style="position:absolute;left:754px;width:600px;text-align:center;top:571px;white-space:nowrap;font-family:'Liberation Serif',serif;font-size:13px;line-height:15px;color:#111;font-size:12px;letter-spacing:-0.15px">1000.03</div>
<div style="position:absolute;left:844px;width:600px;text-align:center;top:571px;white-space:nowrap;font-family:'Liberation Serif',serif;font-size:13px;line-height:15px;color:#111;font-size:12px;letter-spacing:-0.15px">7200.02</div>
<div style="position:absolute;left:1194px;top:571px;white-space:nowrap;font-family:'Liberation Serif',serif;font-size:13px;line-height:15px;color:#111;letter-spacing:-0.12px">Biaya Adm - Biaya Adm Bank &amp; Buku Cek/Giro</div>
<div style="position:absolute;left:1481px;top:571px;white-space:nowrap;font-family:'Liberation Serif',serif;font-size:13px;line-height:15px;color:#111;">Biaya Adm</div>
<div style="position:absolute;left:1667px;top:571px;white-space:nowrap;font-family:'Liberation Serif',serif;font-size:13px;line-height:15px;color:#111;letter-spacing:-0.14px">Biaya Adm Bank &amp; Buku Cek/Giro</div>
<div style="position:absolute;left:1012px;top:586px;width:85px;height:1px;background:#c8c8c8"></div>
<div style="position:absolute;left:1192px;top:586px;width:286px;height:1px;background:#c8c8c8"></div>
<div style="position:absolute;left:1857px;top:570px;width:41px;height:16px;border:1px solid #d4d4d4;border-right:none"></div>
<div style="position:absolute;left:0px;top:584px;width:32px;height:1px;background:#b0b0b0"></div>
<div style="position:absolute;left:0px;top:588px;width:32px;height:1px;background:#b0b0b0"></div>
<div style="position:absolute;left:0px;top:603px;width:32px;height:1px;background:#c0c0c0"></div>
<div style="position:absolute;left:-284px;width:600px;text-align:center;top:588px;white-space:nowrap;font-size:12.5px;line-height:16px;color:#2a2aa8">1093</div>
<div style="position:absolute;left:35px;top:588px;white-space:nowrap;font-family:'Liberation Serif',serif;font-size:12px;line-height:15px;color:#111;font-size:11.5px;letter-spacing:-0.28px;-webkit-text-stroke:0.2px #111">BIF TRANSFER KE 008DARA BANCA INDONESKBB</div>
<div style="position:absolute;left:302px;width:600px;text-align:right;top:588px;white-space:nowrap;font-family:'Liberation Serif',serif;font-size:12px;line-height:15px;color:#111;letter-spacing:0.45px">14.121.900,00</div>
<div style="position:absolute;left:408px;width:600px;text-align:right;top:588px;white-space:nowrap;font-family:'Liberation Serif',serif;font-size:12px;line-height:15px;color:#111;letter-spacing:0.5px">437.203.391</div>
<div style="position:absolute;left:754px;width:600px;text-align:center;top:588px;white-space:nowrap;font-family:'Liberation Serif',serif;font-size:13px;line-height:15px;color:#111;font-size:12px;letter-spacing:-0.15px">1000.03</div>
<div style="position:absolute;left:844px;width:600px;text-align:center;top:588px;white-space:nowrap;font-family:'Liberation Serif',serif;font-size:13px;line-height:15px;color:#111;font-size:12px;letter-spacing:-0.15px">5000.01</div>
<div style="position:absolute;left:1194px;top:588px;white-space:nowrap;font-family:'Liberation Serif',serif;font-size:13px;line-height:15px;color:#111;letter-spacing:-0.12px">Biaya Adm -</div>
<div style="position:absolute;left:1481px;top:588px;white-space:nowrap;font-family:'Liberation Serif',serif;font-size:13px;line-height:15px;color:#111;">Biaya Adm</div>
<div style="position:absolute;left:1012px;top:603px;width:85px;height:1px;background:#c8c8c8"></div>
<div style="position:absolute;left:1192px;top:603px;width:286px;height:1px;background:#c8c8c8"></div>
<div style="position:absolute;left:0px;top:620px;width:32px;height:1px;background:#c0c0c0"></div>
<div style="position:absolute;left:-284px;width:600px;text-align:center;top:605px;white-space:nowrap;font-size:12.5px;line-height:16px;color:#2a2aa8">1094</div>
<div style="position:absolute;left:35px;top:605px;white-space:nowrap;font-family:'Liberation Serif',serif;font-size:12px;line-height:15px;color:#111;font-size:11.5px;letter-spacing:-0.28px;-webkit-text-stroke:0.2px #111">BIF BIAYA TXN KE 008DARA BANCA INDONESKBB</div>
<div style="position:absolute;left:302px;width:600px;text-align:right;top:605px;white-space:nowrap;font-family:'Liberation Serif',serif;font-size:12px;line-height:15px;color:#111;letter-spacing:0.45px">2.500,00</div>
<div style="position:absolute;left:408px;width:600px;text-align:right;top:605px;white-space:nowrap;font-family:'Liberation Serif',serif;font-size:12px;line-height:15px;color:#111;letter-spacing:0.5px">437.200.891</div>
<div style="position:absolute;left:754px;width:600px;text-align:center;top:605px;white-space:nowrap;font-family:'Liberation Serif',serif;font-size:13px;line-height:15px;color:#111;font-size:12px;letter-spacing:-0.15px">1000.03</div>
<div style="position:absolute;left:844px;width:600px;text-align:center;top:605px;white-space:nowrap;font-family:'Liberation Serif',serif;font-size:13px;line-height:15px;color:#111;font-size:12px;letter-spacing:-0.15px">7200.02</div>
<div style="position:absolute;left:1194px;top:605px;white-space:nowrap;font-family:'Liberation Serif',serif;font-size:13px;line-height:15px;color:#111;letter-spacing:-0.12px">Biaya Adm - Biaya Adm Bank &amp; Buku Cek/Giro</div>
<div style="position:absolute;left:1481px;top:605px;white-space:nowrap;font-family:'Liberation Serif',serif;font-size:13px;line-height:15px;color:#111;">Biaya Adm</div>
<div style="position:absolute;left:1667px;top:605px;white-space:nowrap;font-family:'Liberation Serif',serif;font-size:13px;line-height:15px;color:#111;letter-spacing:-0.14px">Biaya Adm Bank &amp; Buku Cek/Giro</div>
<div style="position:absolute;left:1012px;top:620px;width:85px;height:1px;background:#c8c8c8"></div>
<div style="position:absolute;left:1192px;top:620px;width:286px;height:1px;background:#c8c8c8"></div>
<div style="position:absolute;left:1857px;top:604px;width:41px;height:16px;border:1px solid #d4d4d4;border-right:none"></div>
<div style="position:absolute;left:0px;top:618px;width:32px;height:1px;background:#b0b0b0"></div>
<div style="position:absolute;left:0px;top:622px;width:32px;height:1px;background:#b0b0b0"></div>
<div style="position:absolute;left:0px;top:637px;width:32px;height:1px;background:#c0c0c0"></div>
<div style="position:absolute;left:-284px;width:600px;text-align:center;top:622px;white-space:nowrap;font-size:12.5px;line-height:16px;color:#2a2aa8">1119</div>
<div style="position:absolute;left:35px;top:622px;white-space:nowrap;font-family:'Liberation Serif',serif;font-size:12px;line-height:15px;color:#111;font-size:11.5px;letter-spacing:-0.28px;-webkit-text-stroke:0.2px #111">BIF TRANSFER KE 008DARA BANCA INDONESKBB</div>
<div style="position:absolute;left:302px;width:600px;text-align:right;top:622px;white-space:nowrap;font-family:'Liberation Serif',serif;font-size:12px;line-height:15px;color:#111;letter-spacing:0.45px">4.193.914,54</div>
<div style="position:absolute;left:408px;width:600px;text-align:right;top:622px;white-space:nowrap;font-family:'Liberation Serif',serif;font-size:12px;line-height:15px;color:#111;letter-spacing:0.5px">523.396.126</div>
<div style="position:absolute;left:754px;width:600px;text-align:center;top:622px;white-space:nowrap;font-family:'Liberation Serif',serif;font-size:13px;line-height:15px;color:#111;font-size:12px;letter-spacing:-0.15px">1000.03</div>
<div style="position:absolute;left:844px;width:600px;text-align:center;top:622px;white-space:nowrap;font-family:'Liberation Serif',serif;font-size:13px;line-height:15px;color:#111;font-size:12px;letter-spacing:-0.15px">4000.01</div>
<div style="position:absolute;left:1194px;top:622px;white-space:nowrap;font-family:'Liberation Serif',serif;font-size:13px;line-height:15px;color:#111;letter-spacing:-0.12px">Biaya Adm -</div>
<div style="position:absolute;left:1481px;top:622px;white-space:nowrap;font-family:'Liberation Serif',serif;font-size:13px;line-height:15px;color:#111;">Biaya Adm</div>
<div style="position:absolute;left:1012px;top:637px;width:85px;height:1px;background:#c8c8c8"></div>
<div style="position:absolute;left:1192px;top:637px;width:286px;height:1px;background:#c8c8c8"></div>
<div style="position:absolute;left:0px;top:654px;width:32px;height:1px;background:#c0c0c0"></div>
<div style="position:absolute;left:-284px;width:600px;text-align:center;top:639px;white-space:nowrap;font-size:12.5px;line-height:16px;color:#2a2aa8">1120</div>
<div style="position:absolute;left:35px;top:639px;white-space:nowrap;font-family:'Liberation Serif',serif;font-size:12px;line-height:15px;color:#111;font-size:11.5px;letter-spacing:-0.28px;-webkit-text-stroke:0.2px #111">BIF BIAYA TXN KE 008DARA BANCA INDONESKBB</div>
<div style="position:absolute;left:302px;width:600px;text-align:right;top:639px;white-space:nowrap;font-family:'Liberation Serif',serif;font-size:12px;line-height:15px;color:#111;letter-spacing:0.45px">2.500,00</div>
<div style="position:absolute;left:408px;width:600px;text-align:right;top:639px;white-space:nowrap;font-family:'Liberation Serif',serif;font-size:12px;line-height:15px;color:#111;letter-spacing:0.5px">523.393.626</div>
<div style="position:absolute;left:754px;width:600px;text-align:center;top:639px;white-space:nowrap;font-family:'Liberation Serif',serif;font-size:13px;line-height:15px;color:#111;font-size:12px;letter-spacing:-0.15px">1000.03</div>
<div style="position:absolute;left:844px;width:600px;text-align:center;top:639px;white-space:nowrap;font-family:'Liberation Serif',serif;font-size:13px;line-height:15px;color:#111;font-size:12px;letter-spacing:-0.15px">7200.02</div>
<div style="position:absolute;left:1194px;top:639px;white-space:nowrap;font-family:'Liberation Serif',serif;font-size:13px;line-height:15px;color:#111;letter-spacing:-0.12px">Biaya Adm - Biaya Adm Bank &amp; Buku Cek/Giro</div>
<div style="position:absolute;left:1481px;top:639px;white-space:nowrap;font-family:'Liberation Serif',serif;font-size:13px;line-height:15px;color:#111;">Biaya Adm</div>
<div style="position:absolute;left:1667px;top:639px;white-space:nowrap;font-family:'Liberation Serif',serif;font-size:13px;line-height:15px;color:#111;letter-spacing:-0.14px">Biaya Adm Bank &amp; Buku Cek/Giro</div>
<div style="position:absolute;left:1012px;top:654px;width:85px;height:1px;background:#c8c8c8"></div>
<div style="position:absolute;left:1192px;top:654px;width:286px;height:1px;background:#c8c8c8"></div>
<div style="position:absolute;left:1857px;top:638px;width:41px;height:16px;border:1px solid #d4d4d4;border-right:none"></div>
<div style="position:absolute;left:0px;top:652px;width:32px;height:1px;background:#b0b0b0"></div>
<div style="position:absolute;left:0px;top:656px;width:32px;height:1px;background:#b0b0b0"></div>
<div style="position:absolute;left:0px;top:671px;width:32px;height:1px;background:#c0c0c0"></div>
<div style="position:absolute;left:-284px;width:600px;text-align:center;top:656px;white-space:nowrap;font-size:12.5px;line-height:16px;color:#2a2aa8">1132</div>
<div style="position:absolute;left:35px;top:656px;white-space:nowrap;font-family:'Liberation Serif',serif;font-size:12px;line-height:15px;color:#111;font-size:11.5px;letter-spacing:-0.28px;-webkit-text-stroke:0.2px #111">BIF TRANSFER KE 008DARA BANCA INDONESKBB</div>
<div style="position:absolute;left:302px;width:600px;text-align:right;top:656px;white-space:nowrap;font-family:'Liberation Serif',serif;font-size:12px;line-height:15px;color:#111;letter-spacing:0.45px">34.419.758,70</div>
<div style="position:absolute;left:408px;width:600px;text-align:right;top:656px;white-space:nowrap;font-family:'Liberation Serif',serif;font-size:12px;line-height:15px;color:#111;letter-spacing:0.5px">474.244.328</div>
<div style="position:absolute;left:754px;width:600px;text-align:center;top:656px;white-space:nowrap;font-family:'Liberation Serif',serif;font-size:13px;line-height:15px;color:#111;font-size:12px;letter-spacing:-0.15px">1000.03</div>
<div style="position:absolute;left:844px;width:600px;text-align:center;top:656px;white-space:nowrap;font-family:'Liberation Serif',serif;font-size:13px;line-height:15px;color:#111;font-size:12px;letter-spacing:-0.15px">5000.01</div>
<div style="position:absolute;left:1194px;top:656px;white-space:nowrap;font-family:'Liberation Serif',serif;font-size:13px;line-height:15px;color:#111;letter-spacing:-0.12px">Biaya Adm -</div>
<div style="position:absolute;left:1481px;top:656px;white-space:nowrap;font-family:'Liberation Serif',serif;font-size:13px;line-height:15px;color:#111;">Biaya Adm</div>
<div style="position:absolute;left:1012px;top:671px;width:85px;height:1px;background:#c8c8c8"></div>
<div style="position:absolute;left:1192px;top:671px;width:286px;height:1px;background:#c8c8c8"></div>
<div style="position:absolute;left:0px;top:688px;width:32px;height:1px;background:#c0c0c0"></div>
<div style="position:absolute;left:-284px;width:600px;text-align:center;top:673px;white-space:nowrap;font-size:12.5px;line-height:16px;color:#2a2aa8">1133</div>
<div style="position:absolute;left:35px;top:673px;white-space:nowrap;font-family:'Liberation Serif',serif;font-size:12px;line-height:15px;color:#111;font-size:11.5px;letter-spacing:-0.28px;-webkit-text-stroke:0.2px #111">BIF BIAYA TXN KE 008DARA BANCA INDONESKBB</div>
<div style="position:absolute;left:302px;width:600px;text-align:right;top:673px;white-space:nowrap;font-family:'Liberation Serif',serif;font-size:12px;line-height:15px;color:#111;letter-spacing:0.45px">2.500,00</div>
<div style="position:absolute;left:408px;width:600px;text-align:right;top:673px;white-space:nowrap;font-family:'Liberation Serif',serif;font-size:12px;line-height:15px;color:#111;letter-spacing:0.5px">474.241.828</div>
<div style="position:absolute;left:754px;width:600px;text-align:center;top:673px;white-space:nowrap;font-family:'Liberation Serif',serif;font-size:13px;line-height:15px;color:#111;font-size:12px;letter-spacing:-0.15px">1000.03</div>
<div style="position:absolute;left:844px;width:600px;text-align:center;top:673px;white-space:nowrap;font-family:'Liberation Serif',serif;font-size:13px;line-height:15px;color:#111;font-size:12px;letter-spacing:-0.15px">7200.02</div>
<div style="position:absolute;left:1194px;top:673px;white-space:nowrap;font-family:'Liberation Serif',serif;font-size:13px;line-height:15px;color:#111;letter-spacing:-0.12px">Biaya Adm - Biaya Adm Bank &amp; Buku Cek/Giro</div>
<div style="position:absolute;left:1481px;top:673px;white-space:nowrap;font-family:'Liberation Serif',serif;font-size:13px;line-height:15px;color:#111;">Biaya Adm</div>
<div style="position:absolute;left:1667px;top:673px;white-space:nowrap;font-family:'Liberation Serif',serif;font-size:13px;line-height:15px;color:#111;letter-spacing:-0.14px">Biaya Adm Bank &amp; Buku Cek/Giro</div>
<div style="position:absolute;left:1012px;top:688px;width:85px;height:1px;background:#c8c8c8"></div>
<div style="position:absolute;left:1192px;top:688px;width:286px;height:1px;background:#c8c8c8"></div>
<div style="position:absolute;left:1857px;top:672px;width:41px;height:16px;border:1px solid #d4d4d4;border-right:none"></div>
<div style="position:absolute;left:0px;top:686px;width:32px;height:1px;background:#b0b0b0"></div>
<div style="position:absolute;left:0px;top:690px;width:32px;height:1px;background:#b0b0b0"></div>
<div style="position:absolute;left:0px;top:705px;width:32px;height:1px;background:#c0c0c0"></div>
<div style="position:absolute;left:-284px;width:600px;text-align:center;top:690px;white-space:nowrap;font-size:12.5px;line-height:16px;color:#2a2aa8">1136</div>
<div style="position:absolute;left:35px;top:690px;white-space:nowrap;font-family:'Liberation Serif',serif;font-size:12px;line-height:15px;color:#111;font-size:11.5px;letter-spacing:-0.28px;-webkit-text-stroke:0.2px #111">BIF TRANSFER KE 008DARA BANCA INDONESKBB</div>
<div style="position:absolute;left:302px;width:600px;text-align:right;top:690px;white-space:nowrap;font-family:'Liberation Serif',serif;font-size:12px;line-height:15px;color:#111;letter-spacing:0.45px">11.146.758,96</div>
<div style="position:absolute;left:408px;width:600px;text-align:right;top:690px;white-space:nowrap;font-family:'Liberation Serif',serif;font-size:12px;line-height:15px;color:#111;letter-spacing:0.5px">463.291.069</div>
<div style="position:absolute;left:754px;width:600px;text-align:center;top:690px;white-space:nowrap;font-family:'Liberation Serif',serif;font-size:13px;line-height:15px;color:#111;font-size:12px;letter-spacing:-0.15px">1000.03</div>
<div style="position:absolute;left:844px;width:600px;text-align:center;top:690px;white-space:nowrap;font-family:'Liberation Serif',serif;font-size:13px;line-height:15px;color:#111;font-size:12px;letter-spacing:-0.15px">5000.01</div>
<div style="position:absolute;left:1194px;top:690px;white-space:nowrap;font-family:'Liberation Serif',serif;font-size:13px;line-height:15px;color:#111;letter-spacing:-0.12px">Biaya Adm -</div>
<div style="position:absolute;left:1481px;top:690px;white-space:nowrap;font-family:'Liberation Serif',serif;font-size:13px;line-height:15px;color:#111;">Biaya Adm</div>
<div style="position:absolute;left:1012px;top:705px;width:85px;height:1px;background:#c8c8c8"></div>
<div style="position:absolute;left:1192px;top:705px;width:286px;height:1px;background:#c8c8c8"></div>
<div style="position:absolute;left:0px;top:722px;width:32px;height:1px;background:#c0c0c0"></div>
<div style="position:absolute;left:-284px;width:600px;text-align:center;top:707px;white-space:nowrap;font-size:12.5px;line-height:16px;color:#2a2aa8">1137</div>
<div style="position:absolute;left:35px;top:707px;white-space:nowrap;font-family:'Liberation Serif',serif;font-size:12px;line-height:15px;color:#111;font-size:11.5px;letter-spacing:-0.28px;-webkit-text-stroke:0.2px #111">BIF BIAYA TXN KE 008DARA BANCA INDONESKBB</div>
<div style="position:absolute;left:302px;width:600px;text-align:right;top:707px;white-space:nowrap;font-family:'Liberation Serif',serif;font-size:12px;line-height:15px;color:#111;letter-spacing:0.45px">2.500,00</div>
<div style="position:absolute;left:408px;width:600px;text-align:right;top:707px;white-space:nowrap;font-family:'Liberation Serif',serif;font-size:12px;line-height:15px;color:#111;letter-spacing:0.5px">463.288.569</div>
<div style="position:absolute;left:754px;width:600px;text-align:center;top:707px;white-space:nowrap;font-family:'Liberation Serif',serif;font-size:13px;line-height:15px;color:#111;font-size:12px;letter-spacing:-0.15px">1000.03</div>
<div style="position:absolute;left:844px;width:600px;text-align:center;top:707px;white-space:nowrap;font-family:'Liberation Serif',serif;font-size:13px;line-height:15px;color:#111;font-size:12px;letter-spacing:-0.15px">7200.02</div>
<div style="position:absolute;left:1194px;top:707px;white-space:nowrap;font-family:'Liberation Serif',serif;font-size:13px;line-height:15px;color:#111;letter-spacing:-0.12px">Biaya Adm - Biaya Adm Bank &amp; Buku Cek/Giro</div>
<div style="position:absolute;left:1481px;top:707px;white-space:nowrap;font-family:'Liberation Serif',serif;font-size:13px;line-height:15px;color:#111;">Biaya Adm</div>
<div style="position:absolute;left:1667px;top:707px;white-space:nowrap;font-family:'Liberation Serif',serif;font-size:13px;line-height:15px;color:#111;letter-spacing:-0.14px">Biaya Adm Bank &amp; Buku Cek/Giro</div>
<div style="position:absolute;left:1012px;top:722px;width:85px;height:1px;background:#c8c8c8"></div>
<div style="position:absolute;left:1192px;top:722px;width:286px;height:1px;background:#c8c8c8"></div>
<div style="position:absolute;left:1857px;top:706px;width:41px;height:16px;border:1px solid #d4d4d4;border-right:none"></div>
<div style="position:absolute;left:0px;top:720px;width:32px;height:1px;background:#b0b0b0"></div>
<div style="position:absolute;left:0px;top:724px;width:32px;height:1px;background:#b0b0b0"></div>
<div style="position:absolute;left:0px;top:739px;width:32px;height:1px;background:#c0c0c0"></div>
<div style="position:absolute;left:-284px;width:600px;text-align:center;top:724px;white-space:nowrap;font-size:12.5px;line-height:16px;color:#2a2aa8">1159</div>
<div style="position:absolute;left:35px;top:724px;white-space:nowrap;font-family:'Liberation Serif',serif;font-size:12px;line-height:15px;color:#111;font-size:11.5px;letter-spacing:-0.28px;-webkit-text-stroke:0.2px #111">BIF TRANSFER KE 008DARA BANCA INDONESKBB</div>
<div style="position:absolute;left:302px;width:600px;text-align:right;top:724px;white-space:nowrap;font-family:'Liberation Serif',serif;font-size:12px;line-height:15px;color:#111;letter-spacing:0.45px">887.250,00</div>
<div style="position:absolute;left:408px;width:600px;text-align:right;top:724px;white-space:nowrap;font-family:'Liberation Serif',serif;font-size:12px;line-height:15px;color:#111;letter-spacing:0.5px">573.777.318</div>
<div style="position:absolute;left:754px;width:600px;text-align:center;top:724px;white-space:nowrap;font-family:'Liberation Serif',serif;font-size:13px;line-height:15px;color:#111;font-size:12px;letter-spacing:-0.15px">1000.03</div>
<div style="position:absolute;left:844px;width:600px;text-align:center;top:724px;white-space:nowrap;font-family:'Liberation Serif',serif;font-size:13px;line-height:15px;color:#111;font-size:12px;letter-spacing:-0.15px">5000.01</div>
<div style="position:absolute;left:1194px;top:724px;white-space:nowrap;font-family:'Liberation Serif',serif;font-size:13px;line-height:15px;color:#111;letter-spacing:-0.12px">Biaya Adm -</div>
<div style="position:absolute;left:1481px;top:724px;white-space:nowrap;font-family:'Liberation Serif',serif;font-size:13px;line-height:15px;color:#111;">Biaya Adm</div>
<div style="position:absolute;left:1012px;top:739px;width:85px;height:1px;background:#c8c8c8"></div>
<div style="position:absolute;left:1192px;top:739px;width:286px;height:1px;background:#c8c8c8"></div>
<div style="position:absolute;left:0px;top:756px;width:32px;height:1px;background:#c0c0c0"></div>
<div style="position:absolute;left:-284px;width:600px;text-align:center;top:741px;white-space:nowrap;font-size:12.5px;line-height:16px;color:#2a2aa8">1160</div>
<div style="position:absolute;left:35px;top:741px;white-space:nowrap;font-family:'Liberation Serif',serif;font-size:12px;line-height:15px;color:#111;font-size:11.5px;letter-spacing:-0.28px;-webkit-text-stroke:0.2px #111">BIF BIAYA TXN KE 008DARA BANCA INDONESKBB</div>
<div style="position:absolute;left:302px;width:600px;text-align:right;top:741px;white-space:nowrap;font-family:'Liberation Serif',serif;font-size:12px;line-height:15px;color:#111;letter-spacing:0.45px">2.500,00</div>
<div style="position:absolute;left:408px;width:600px;text-align:right;top:741px;white-space:nowrap;font-family:'Liberation Serif',serif;font-size:12px;line-height:15px;color:#111;letter-spacing:0.5px">573.774.818</div>
<div style="position:absolute;left:754px;width:600px;text-align:center;top:741px;white-space:nowrap;font-family:'Liberation Serif',serif;font-size:13px;line-height:15px;color:#111;font-size:12px;letter-spacing:-0.15px">1000.03</div>
<div style="position:absolute;left:844px;width:600px;text-align:center;top:741px;white-space:nowrap;font-family:'Liberation Serif',serif;font-size:13px;line-height:15px;color:#111;font-size:12px;letter-spacing:-0.15px">7200.02</div>
<div style="position:absolute;left:1194px;top:741px;white-space:nowrap;font-family:'Liberation Serif',serif;font-size:13px;line-height:15px;color:#111;letter-spacing:-0.12px">Biaya Adm - Biaya Adm Bank &amp; Buku Cek/Giro</div>
<div style="position:absolute;left:1481px;top:741px;white-space:nowrap;font-family:'Liberation Serif',serif;font-size:13px;line-height:15px;color:#111;">Biaya Adm</div>
<div style="position:absolute;left:1667px;top:741px;white-space:nowrap;font-family:'Liberation Serif',serif;font-size:13px;line-height:15px;color:#111;letter-spacing:-0.14px">Biaya Adm Bank &amp; Buku Cek/Giro</div>
<div style="position:absolute;left:1012px;top:756px;width:85px;height:1px;background:#c8c8c8"></div>
<div style="position:absolute;left:1192px;top:756px;width:286px;height:1px;background:#c8c8c8"></div>
<div style="position:absolute;left:1857px;top:740px;width:41px;height:16px;border:1px solid #d4d4d4;border-right:none"></div>
<div style="position:absolute;left:0px;top:754px;width:32px;height:1px;background:#b0b0b0"></div>
<div style="position:absolute;left:0px;top:758px;width:32px;height:1px;background:#b0b0b0"></div>
<div style="position:absolute;left:0px;top:773px;width:32px;height:1px;background:#c0c0c0"></div>
<div style="position:absolute;left:-284px;width:600px;text-align:center;top:758px;white-space:nowrap;font-size:12.5px;line-height:16px;color:#2a2aa8">1164</div>
<div style="position:absolute;left:35px;top:758px;white-space:nowrap;font-family:'Liberation Serif',serif;font-size:12px;line-height:15px;color:#111;font-size:11.5px;letter-spacing:-0.28px;-webkit-text-stroke:0.2px #111">BIF TRANSFER KE 008DARA BANCA INDONESKBB</div>
<div style="position:absolute;left:302px;width:600px;text-align:right;top:758px;white-space:nowrap;font-family:'Liberation Serif',serif;font-size:12px;line-height:15px;color:#111;letter-spacing:0.45px">2.613.281,92</div>
<div style="position:absolute;left:408px;width:600px;text-align:right;top:758px;white-space:nowrap;font-family:'Liberation Serif',serif;font-size:12px;line-height:15px;color:#111;letter-spacing:0.5px">558.944.437</div>
<div style="position:absolute;left:754px;width:600px;text-align:center;top:758px;white-space:nowrap;font-family:'Liberation Serif',serif;font-size:13px;line-height:15px;color:#111;font-size:12px;letter-spacing:-0.15px">1000.03</div>
<div style="position:absolute;left:844px;width:600px;text-align:center;top:758px;white-space:nowrap;font-family:'Liberation Serif',serif;font-size:13px;line-height:15px;color:#111;font-size:12px;letter-spacing:-0.15px">5000.01</div>
<div style="position:absolute;left:1194px;top:758px;white-space:nowrap;font-family:'Liberation Serif',serif;font-size:13px;line-height:15px;color:#111;letter-spacing:-0.12px">Biaya Adm -</div>
<div style="position:absolute;left:1481px;top:758px;white-space:nowrap;font-family:'Liberation Serif',serif;font-size:13px;line-height:15px;color:#111;">Biaya Adm</div>
<div style="position:absolute;left:1012px;top:773px;width:85px;height:1px;background:#c8c8c8"></div>
<div style="position:absolute;left:1192px;top:773px;width:286px;height:1px;background:#c8c8c8"></div>
<div style="position:absolute;left:0px;top:790px;width:32px;height:1px;background:#c0c0c0"></div>
<div style="position:absolute;left:-284px;width:600px;text-align:center;top:775px;white-space:nowrap;font-size:12.5px;line-height:16px;color:#2a2aa8">1165</div>
<div style="position:absolute;left:35px;top:775px;white-space:nowrap;font-family:'Liberation Serif',serif;font-size:12px;line-height:15px;color:#111;font-size:11.5px;letter-spacing:-0.28px;-webkit-text-stroke:0.2px #111">BIF BIAYA TXN KE 008DARA BANCA INDONESKBB</div>
<div style="position:absolute;left:302px;width:600px;text-align:right;top:775px;white-space:nowrap;font-family:'Liberation Serif',serif;font-size:12px;line-height:15px;color:#111;letter-spacing:0.45px">2.500,00</div>
<div style="position:absolute;left:408px;width:600px;text-align:right;top:775px;white-space:nowrap;font-family:'Liberation Serif',serif;font-size:12px;line-height:15px;color:#111;letter-spacing:0.5px">558.941.937</div>
<div style="position:absolute;left:754px;width:600px;text-align:center;top:775px;white-space:nowrap;font-family:'Liberation Serif',serif;font-size:13px;line-height:15px;color:#111;font-size:12px;letter-spacing:-0.15px">1000.03</div>
<div style="position:absolute;left:844px;width:600px;text-align:center;top:775px;white-space:nowrap;font-family:'Liberation Serif',serif;font-size:13px;line-height:15px;color:#111;font-size:12px;letter-spacing:-0.15px">7200.02</div>
<div style="position:absolute;left:1194px;top:775px;white-space:nowrap;font-family:'Liberation Serif',serif;font-size:13px;line-height:15px;color:#111;letter-spacing:-0.12px">Biaya Adm - Biaya Adm Bank &amp; Buku Cek/Giro</div>
<div style="position:absolute;left:1481px;top:775px;white-space:nowrap;font-family:'Liberation Serif',serif;font-size:13px;line-height:15px;color:#111;">Biaya Adm</div>
<div style="position:absolute;left:1667px;top:775px;white-space:nowrap;font-family:'Liberation Serif',serif;font-size:13px;line-height:15px;color:#111;letter-spacing:-0.14px">Biaya Adm Bank &amp; Buku Cek/Giro</div>
<div style="position:absolute;left:1012px;top:790px;width:85px;height:1px;background:#c8c8c8"></div>
<div style="position:absolute;left:1192px;top:790px;width:286px;height:1px;background:#c8c8c8"></div>
<div style="position:absolute;left:1857px;top:774px;width:41px;height:16px;border:1px solid #d4d4d4;border-right:none"></div>
<div style="position:absolute;left:0px;top:788px;width:32px;height:1px;background:#b0b0b0"></div>
<div style="position:absolute;left:0px;top:792px;width:32px;height:1px;background:#b0b0b0"></div>
<div style="position:absolute;left:0px;top:807px;width:32px;height:1px;background:#c0c0c0"></div>
<div style="position:absolute;left:-284px;width:600px;text-align:center;top:792px;white-space:nowrap;font-size:12.5px;line-height:16px;color:#2a2aa8">1171</div>
<div style="position:absolute;left:35px;top:792px;white-space:nowrap;font-family:'Liberation Serif',serif;font-size:12px;line-height:15px;color:#111;font-size:11.5px;letter-spacing:-0.28px;-webkit-text-stroke:0.2px #111">BIF TRANSFER KE 008DARA BANCA INDONESKBB</div>
<div style="position:absolute;left:302px;width:600px;text-align:right;top:792px;white-space:nowrap;font-family:'Liberation Serif',serif;font-size:12px;line-height:15px;color:#111;letter-spacing:0.45px">5.201.356</div>
<div style="position:absolute;left:408px;width:600px;text-align:right;top:792px;white-space:nowrap;font-family:'Liberation Serif',serif;font-size:12px;line-height:15px;color:#111;letter-spacing:0.5px">517.036.036</div>
<div style="position:absolute;left:754px;width:600px;text-align:center;top:792px;white-space:nowrap;font-family:'Liberation Serif',serif;font-size:13px;line-height:15px;color:#111;font-size:12px;letter-spacing:-0.15px">1000.03</div>
<div style="position:absolute;left:844px;width:600px;text-align:center;top:792px;white-space:nowrap;font-family:'Liberation Serif',serif;font-size:13px;line-height:15px;color:#111;font-size:12px;letter-spacing:-0.15px">4000.01</div>
<div style="position:absolute;left:1194px;top:792px;white-space:nowrap;font-family:'Liberation Serif',serif;font-size:13px;line-height:15px;color:#111;letter-spacing:-0.12px">Biaya Adm -</div>
<div style="position:absolute;left:1481px;top:792px;white-space:nowrap;font-family:'Liberation Serif',serif;font-size:13px;line-height:15px;color:#111;">Biaya Adm</div>
<div style="position:absolute;left:1012px;top:807px;width:85px;height:1px;background:#c8c8c8"></div>
<div style="position:absolute;left:1192px;top:807px;width:286px;height:1px;background:#c8c8c8"></div>
<div style="position:absolute;left:0px;top:824px;width:32px;height:1px;background:#c0c0c0"></div>
<div style="position:absolute;left:-284px;width:600px;text-align:center;top:809px;white-space:nowrap;font-size:12.5px;line-height:16px;color:#2a2aa8">1172</div>
<div style="position:absolute;left:35px;top:809px;white-space:nowrap;font-family:'Liberation Serif',serif;font-size:12px;line-height:15px;color:#111;font-size:11.5px;letter-spacing:-0.28px;-webkit-text-stroke:0.2px #111">BIF BIAYA TXN KE 008DARA BANCA INDONESKBB</div>
<div style="position:absolute;left:302px;width:600px;text-align:right;top:809px;white-space:nowrap;font-family:'Liberation Serif',serif;font-size:12px;line-height:15px;color:#111;letter-spacing:0.45px">2.500</div>
<div style="position:absolute;left:408px;width:600px;text-align:right;top:809px;white-space:nowrap;font-family:'Liberation Serif',serif;font-size:12px;line-height:15px;color:#111;letter-spacing:0.5px">517.033.536</div>
<div style="position:absolute;left:754px;width:600px;text-align:center;top:809px;white-space:nowrap;font-family:'Liberation Serif',serif;font-size:13px;line-height:15px;color:#111;font-size:12px;letter-spacing:-0.15px">1000.03</div>
<div style="position:absolute;left:844px;width:600px;text-align:center;top:809px;white-space:nowrap;font-family:'Liberation Serif',serif;font-size:13px;line-height:15px;color:#111;font-size:12px;letter-spacing:-0.15px">7200.02</div>
<div style="position:absolute;left:1194px;top:809px;white-space:nowrap;font-family:'Liberation Serif',serif;font-size:13px;line-height:15px;color:#111;letter-spacing:-0.12px">Biaya Adm - Biaya Adm Bank &amp; Buku Cek/Giro</div>
<div style="position:absolute;left:1481px;top:809px;white-space:nowrap;font-family:'Liberation Serif',serif;font-size:13px;line-height:15px;color:#111;">Biaya Adm</div>
<div style="position:absolute;left:1667px;top:809px;white-space:nowrap;font-family:'Liberation Serif',serif;font-size:13px;line-height:15px;color:#111;letter-spacing:-0.14px">Biaya Adm Bank &amp; Buku Cek/Giro</div>
<div style="position:absolute;left:1012px;top:824px;width:85px;height:1px;background:#c8c8c8"></div>
<div style="position:absolute;left:1192px;top:824px;width:286px;height:1px;background:#c8c8c8"></div>
<div style="position:absolute;left:1857px;top:808px;width:41px;height:16px;border:1px solid #d4d4d4;border-right:none"></div>
<div style="position:absolute;left:0px;top:822px;width:32px;height:1px;background:#b0b0b0"></div>
<div style="position:absolute;left:0px;top:826px;width:32px;height:1px;background:#b0b0b0"></div>
<div style="position:absolute;left:0px;top:841px;width:32px;height:1px;background:#c0c0c0"></div>
<div style="position:absolute;left:-284px;width:600px;text-align:center;top:826px;white-space:nowrap;font-size:12.5px;line-height:16px;color:#2a2aa8">1174</div>
<div style="position:absolute;left:35px;top:826px;white-space:nowrap;font-family:'Liberation Serif',serif;font-size:12px;line-height:15px;color:#111;font-size:11.5px;letter-spacing:-0.28px;-webkit-text-stroke:0.2px #111">BIF TRANSFER KE 008DARA BANCA INDONESKBB</div>
<div style="position:absolute;left:302px;width:600px;text-align:right;top:826px;white-space:nowrap;font-family:'Liberation Serif',serif;font-size:12px;line-height:15px;color:#111;letter-spacing:0.45px">12.717.368,27</div>
<div style="position:absolute;left:408px;width:600px;text-align:right;top:826px;white-space:nowrap;font-family:'Liberation Serif',serif;font-size:12px;line-height:15px;color:#111;letter-spacing:0.5px">501.849.168</div>
<div style="position:absolute;left:754px;width:600px;text-align:center;top:826px;white-space:nowrap;font-family:'Liberation Serif',serif;font-size:13px;line-height:15px;color:#111;font-size:12px;letter-spacing:-0.15px">1000.03</div>
<div style="position:absolute;left:844px;width:600px;text-align:center;top:826px;white-space:nowrap;font-family:'Liberation Serif',serif;font-size:13px;line-height:15px;color:#111;font-size:12px;letter-spacing:-0.15px">4000.01</div>
<div style="position:absolute;left:1194px;top:826px;white-space:nowrap;font-family:'Liberation Serif',serif;font-size:13px;line-height:15px;color:#111;letter-spacing:-0.12px">Biaya Adm -</div>
<div style="position:absolute;left:1481px;top:826px;white-space:nowrap;font-family:'Liberation Serif',serif;font-size:13px;line-height:15px;color:#111;">Biaya Adm</div>
<div style="position:absolute;left:1012px;top:841px;width:85px;height:1px;background:#c8c8c8"></div>
<div style="position:absolute;left:1192px;top:841px;width:286px;height:1px;background:#c8c8c8"></div>
<div style="position:absolute;left:0px;top:858px;width:32px;height:1px;background:#c0c0c0"></div>
<div style="position:absolute;left:-284px;width:600px;text-align:center;top:843px;white-space:nowrap;font-size:12.5px;line-height:16px;color:#2a2aa8">1175</div>
<div style="position:absolute;left:35px;top:843px;white-space:nowrap;font-family:'Liberation Serif',serif;font-size:12px;line-height:15px;color:#111;font-size:11.5px;letter-spacing:-0.28px;-webkit-text-stroke:0.2px #111">BIF BIAYA TXN KE 008DARA BANCA INDONESKBB</div>
<div style="position:absolute;left:302px;width:600px;text-align:right;top:843px;white-space:nowrap;font-family:'Liberation Serif',serif;font-size:12px;line-height:15px;color:#111;letter-spacing:0.45px">2.500</div>
<div style="position:absolute;left:408px;width:600px;text-align:right;top:843px;white-space:nowrap;font-family:'Liberation Serif',serif;font-size:12px;line-height:15px;color:#111;letter-spacing:0.5px">501.846.668</div>
<div style="position:absolute;left:754px;width:600px;text-align:center;top:843px;white-space:nowrap;font-family:'Liberation Serif',serif;font-size:13px;line-height:15px;color:#111;font-size:12px;letter-spacing:-0.15px">1000.03</div>
<div style="position:absolute;left:844px;width:600px;text-align:center;top:843px;white-space:nowrap;font-family:'Liberation Serif',serif;font-size:13px;line-height:15px;color:#111;font-size:12px;letter-spacing:-0.15px">7200.02</div>
<div style="position:absolute;left:1194px;top:843px;white-space:nowrap;font-family:'Liberation Serif',serif;font-size:13px;line-height:15px;color:#111;letter-spacing:-0.12px">Biaya Adm - Biaya Adm Bank &amp; Buku Cek/Giro</div>
<div style="position:absolute;left:1481px;top:843px;white-space:nowrap;font-family:'Liberation Serif',serif;font-size:13px;line-height:15px;color:#111;">Biaya Adm</div>
<div style="position:absolute;left:1667px;top:843px;white-space:nowrap;font-family:'Liberation Serif',serif;font-size:13px;line-height:15px;color:#111;letter-spacing:-0.14px">Biaya Adm Bank &amp; Buku Cek/Giro</div>
<div style="position:absolute;left:1012px;top:858px;width:85px;height:1px;background:#c8c8c8"></div>
<div style="position:absolute;left:1192px;top:858px;width:286px;height:1px;background:#c8c8c8"></div>
<div style="position:absolute;left:1857px;top:842px;width:41px;height:16px;border:1px solid #d4d4d4;border-right:none"></div>
<div style="position:absolute;left:0px;top:856px;width:32px;height:1px;background:#b0b0b0"></div>
<div style="position:absolute;left:0px;top:860px;width:32px;height:1px;background:#b0b0b0"></div>
<div style="position:absolute;left:0px;top:875px;width:32px;height:1px;background:#c0c0c0"></div>
<div style="position:absolute;left:-284px;width:600px;text-align:center;top:860px;white-space:nowrap;font-size:12.5px;line-height:16px;color:#2a2aa8">1205</div>
<div style="position:absolute;left:35px;top:860px;white-space:nowrap;font-family:'Liberation Serif',serif;font-size:12px;line-height:15px;color:#111;font-size:11.5px;letter-spacing:-0.28px;-webkit-text-stroke:0.2px #111">BIF TRANSFER KE 008DARA BANCA INDONESKBB</div>
<div style="position:absolute;left:302px;width:600px;text-align:right;top:860px;white-space:nowrap;font-family:'Liberation Serif',serif;font-size:12px;line-height:15px;color:#111;letter-spacing:0.45px">46.542.257,65</div>
<div style="position:absolute;left:408px;width:600px;text-align:right;top:860px;white-space:nowrap;font-family:'Liberation Serif',serif;font-size:12px;line-height:15px;color:#111;letter-spacing:0.5px">540.651.560</div>
<div style="position:absolute;left:754px;width:600px;text-align:center;top:860px;white-space:nowrap;font-family:'Liberation Serif',serif;font-size:13px;line-height:15px;color:#111;font-size:12px;letter-spacing:-0.15px">1000.03</div>
<div style="position:absolute;left:844px;width:600px;text-align:center;top:860px;white-space:nowrap;font-family:'Liberation Serif',serif;font-size:13px;line-height:15px;color:#111;font-size:12px;letter-spacing:-0.15px">5000.01</div>
<div style="position:absolute;left:1194px;top:860px;white-space:nowrap;font-family:'Liberation Serif',serif;font-size:13px;line-height:15px;color:#111;letter-spacing:-0.12px">Biaya Adm -</div>
<div style="position:absolute;left:1481px;top:860px;white-space:nowrap;font-family:'Liberation Serif',serif;font-size:13px;line-height:15px;color:#111;">Biaya Adm</div>
<div style="position:absolute;left:1012px;top:875px;width:85px;height:1px;background:#c8c8c8"></div>
<div style="position:absolute;left:1192px;top:875px;width:286px;height:1px;background:#c8c8c8"></div>
<div style="position:absolute;left:0px;top:892px;width:32px;height:1px;background:#c0c0c0"></div>
<div style="position:absolute;left:-284px;width:600px;text-align:center;top:877px;white-space:nowrap;font-size:12.5px;line-height:16px;color:#2a2aa8">1206</div>
<div style="position:absolute;left:35px;top:877px;white-space:nowrap;font-family:'Liberation Serif',serif;font-size:12px;line-height:15px;color:#111;font-size:11.5px;letter-spacing:-0.28px;-webkit-text-stroke:0.2px #111">BIF BIAYA TXN KE 008DARA BANCA INDONESKBB</div>
<div style="position:absolute;left:302px;width:600px;text-align:right;top:877px;white-space:nowrap;font-family:'Liberation Serif',serif;font-size:12px;line-height:15px;color:#111;letter-spacing:0.45px">2.500,00</div>
<div style="position:absolute;left:408px;width:600px;text-align:right;top:877px;white-space:nowrap;font-family:'Liberation Serif',serif;font-size:12px;line-height:15px;color:#111;letter-spacing:0.5px">540.649.060</div>
<div style="position:absolute;left:754px;width:600px;text-align:center;top:877px;white-space:nowrap;font-family:'Liberation Serif',serif;font-size:13px;line-height:15px;color:#111;font-size:12px;letter-spacing:-0.15px">1000.03</div>
<div style="position:absolute;left:844px;width:600px;text-align:center;top:877px;white-space:nowrap;font-family:'Liberation Serif',serif;font-size:13px;line-height:15px;color:#111;font-size:12px;letter-spacing:-0.15px">7200.02</div>
<div style="position:absolute;left:1194px;top:877px;white-space:nowrap;font-family:'Liberation Serif',serif;font-size:13px;line-height:15px;color:#111;letter-spacing:-0.12px">Biaya Adm - Biaya Adm Bank &amp; Buku Cek/Giro</div>
<div style="position:absolute;left:1481px;top:877px;white-space:nowrap;font-family:'Liberation Serif',serif;font-size:13px;line-height:15px;color:#111;">Biaya Adm</div>
<div style="position:absolute;left:1667px;top:877px;white-space:nowrap;font-family:'Liberation Serif',serif;font-size:13px;line-height:15px;color:#111;letter-spacing:-0.14px">Biaya Adm Bank &amp; Buku Cek/Giro</div>
<div style="position:absolute;left:1012px;top:892px;width:85px;height:1px;background:#c8c8c8"></div>
<div style="position:absolute;left:1192px;top:892px;width:286px;height:1px;background:#c8c8c8"></div>
<div style="position:absolute;left:1857px;top:876px;width:41px;height:16px;border:1px solid #d4d4d4;border-right:none"></div>
<div style="position:absolute;left:0px;top:890px;width:32px;height:1px;background:#b0b0b0"></div>
<div style="position:absolute;left:0px;top:894px;width:32px;height:1px;background:#b0b0b0"></div>
<div style="position:absolute;left:0px;top:909px;width:32px;height:1px;background:#c0c0c0"></div>
<div style="position:absolute;left:-284px;width:600px;text-align:center;top:894px;white-space:nowrap;font-size:12.5px;line-height:16px;color:#2a2aa8">1225</div>
<div style="position:absolute;left:35px;top:894px;white-space:nowrap;font-family:'Liberation Serif',serif;font-size:12px;line-height:15px;color:#111;font-size:11.5px;letter-spacing:-0.28px;-webkit-text-stroke:0.2px #111">BIF TRANSFER KE 008DARA BANCA INDONESKBB</div>
<div style="position:absolute;left:302px;width:600px;text-align:right;top:894px;white-space:nowrap;font-family:'Liberation Serif',serif;font-size:12px;line-height:15px;color:#111;letter-spacing:0.45px">4.166.250,38</div>
<div style="position:absolute;left:408px;width:600px;text-align:right;top:894px;white-space:nowrap;font-family:'Liberation Serif',serif;font-size:12px;line-height:15px;color:#111;letter-spacing:0.5px">502.715.941</div>
<div style="position:absolute;left:754px;width:600px;text-align:center;top:894px;white-space:nowrap;font-family:'Liberation Serif',serif;font-size:13px;line-height:15px;color:#111;font-size:12px;letter-spacing:-0.15px">1000.03</div>
<div style="position:absolute;left:844px;width:600px;text-align:center;top:894px;white-space:nowrap;font-family:'Liberation Serif',serif;font-size:13px;line-height:15px;color:#111;font-size:12px;letter-spacing:-0.15px">5000.01</div>
<div style="position:absolute;left:1194px;top:894px;white-space:nowrap;font-family:'Liberation Serif',serif;font-size:13px;line-height:15px;color:#111;letter-spacing:-0.12px">Biaya Adm -</div>
<div style="position:absolute;left:1481px;top:894px;white-space:nowrap;font-family:'Liberation Serif',serif;font-size:13px;line-height:15px;color:#111;">Biaya Adm</div>
<div style="position:absolute;left:1012px;top:909px;width:85px;height:1px;background:#c8c8c8"></div>
<div style="position:absolute;left:1192px;top:909px;width:286px;height:1px;background:#c8c8c8"></div>
<div style="position:absolute;left:0px;top:926px;width:32px;height:1px;background:#c0c0c0"></div>
<div style="position:absolute;left:-284px;width:600px;text-align:center;top:911px;white-space:nowrap;font-size:12.5px;line-height:16px;color:#2a2aa8">1226</div>
<div style="position:absolute;left:35px;top:911px;white-space:nowrap;font-family:'Liberation Serif',serif;font-size:12px;line-height:15px;color:#111;font-size:11.5px;letter-spacing:-0.28px;-webkit-text-stroke:0.2px #111">BIF BIAYA TXN KE 008DARA BANCA INDONESKBB</div>
<div style="position:absolute;left:302px;width:600px;text-align:right;top:911px;white-space:nowrap;font-family:'Liberation Serif',serif;font-size:12px;line-height:15px;color:#111;letter-spacing:0.45px">2.500,00</div>
<div style="position:absolute;left:408px;width:600px;text-align:right;top:911px;white-space:nowrap;font-family:'Liberation Serif',serif;font-size:12px;line-height:15px;color:#111;letter-spacing:0.5px">502.713.441</div>
<div style="position:absolute;left:754px;width:600px;text-align:center;top:911px;white-space:nowrap;font-family:'Liberation Serif',serif;font-size:13px;line-height:15px;color:#111;font-size:12px;letter-spacing:-0.15px">1000.03</div>
<div style="position:absolute;left:844px;width:600px;text-align:center;top:911px;white-space:nowrap;font-family:'Liberation Serif',serif;font-size:13px;line-height:15px;color:#111;font-size:12px;letter-spacing:-0.15px">7200.02</div>
<div style="position:absolute;left:1194px;top:911px;white-space:nowrap;font-family:'Liberation Serif',serif;font-size:13px;line-height:15px;color:#111;letter-spacing:-0.12px">Biaya Adm - Biaya Adm Bank &amp; Buku Cek/Giro</div>
<div style="position:absolute;left:1481px;top:911px;white-space:nowrap;font-family:'Liberation Serif',serif;font-size:13px;line-height:15px;color:#111;">Biaya Adm</div>
<div style="position:absolute;left:1667px;top:911px;white-space:nowrap;font-family:'Liberation Serif',serif;font-size:13px;line-height:15px;color:#111;letter-spacing:-0.14px">Biaya Adm Bank &amp; Buku Cek/Giro</div>
<div style="position:absolute;left:1012px;top:926px;width:85px;height:1px;background:#c8c8c8"></div>
<div style="position:absolute;left:1192px;top:926px;width:286px;height:1px;background:#c8c8c8"></div>
<div style="position:absolute;left:1857px;top:910px;width:41px;height:16px;border:1px solid #d4d4d4;border-right:none"></div>
<div style="position:absolute;left:0px;top:924px;width:32px;height:1px;background:#b0b0b0"></div>
<div style="position:absolute;left:0px;top:928px;width:32px;height:1px;background:#b0b0b0"></div>
<div style="position:absolute;left:0px;top:943px;width:32px;height:1px;background:#c0c0c0"></div>
<div style="position:absolute;left:-284px;width:600px;text-align:center;top:928px;white-space:nowrap;font-size:12.5px;line-height:16px;color:#2a2aa8">1254</div>
<div style="position:absolute;left:35px;top:928px;white-space:nowrap;font-family:'Liberation Serif',serif;font-size:12px;line-height:15px;color:#111;font-size:11.5px;letter-spacing:-0.28px;-webkit-text-stroke:0.2px #111">BIF TRANSFER KE 008DARA BANCA INDONESKBB</div>
<div style="position:absolute;left:302px;width:600px;text-align:right;top:928px;white-space:nowrap;font-family:'Liberation Serif',serif;font-size:12px;line-height:15px;color:#111;letter-spacing:0.45px">16.637.519,70</div>
<div style="position:absolute;left:408px;width:600px;text-align:right;top:928px;white-space:nowrap;font-family:'Liberation Serif',serif;font-size:12px;line-height:15px;color:#111;letter-spacing:0.5px">536.471.667</div>
<div style="position:absolute;left:754px;width:600px;text-align:center;top:928px;white-space:nowrap;font-family:'Liberation Serif',serif;font-size:13px;line-height:15px;color:#111;font-size:12px;letter-spacing:-0.15px">1000.03</div>
<div style="position:absolute;left:844px;width:600px;text-align:center;top:928px;white-space:nowrap;font-family:'Liberation Serif',serif;font-size:13px;line-height:15px;color:#111;font-size:12px;letter-spacing:-0.15px">5000.01</div>
<div style="position:absolute;left:1194px;top:928px;white-space:nowrap;font-family:'Liberation Serif',serif;font-size:13px;line-height:15px;color:#111;letter-spacing:-0.12px">Biaya Adm -</div>
<div style="position:absolute;left:1481px;top:928px;white-space:nowrap;font-family:'Liberation Serif',serif;font-size:13px;line-height:15px;color:#111;">Biaya Adm</div>
<div style="position:absolute;left:1012px;top:943px;width:85px;height:1px;background:#c8c8c8"></div>
<div style="position:absolute;left:1192px;top:943px;width:286px;height:1px;background:#c8c8c8"></div>
<div style="position:absolute;left:0px;top:960px;width:32px;height:1px;background:#c0c0c0"></div>
<div style="position:absolute;left:-284px;width:600px;text-align:center;top:945px;white-space:nowrap;font-size:12.5px;line-height:16px;color:#2a2aa8">1255</div>
<div style="position:absolute;left:35px;top:945px;white-space:nowrap;font-family:'Liberation Serif',serif;font-size:12px;line-height:15px;color:#111;font-size:11.5px;letter-spacing:-0.28px;-webkit-text-stroke:0.2px #111">BIF BIAYA TXN KE 008DARA BANCA INDONESKBB</div>
<div style="position:absolute;left:302px;width:600px;text-align:right;top:945px;white-space:nowrap;font-family:'Liberation Serif',serif;font-size:12px;line-height:15px;color:#111;letter-spacing:0.45px">2.500,00</div>
<div style="position:absolute;left:408px;width:600px;text-align:right;top:945px;white-space:nowrap;font-family:'Liberation Serif',serif;font-size:12px;line-height:15px;color:#111;letter-spacing:0.5px">536.469.167</div>
<div style="position:absolute;left:754px;width:600px;text-align:center;top:945px;white-space:nowrap;font-family:'Liberation Serif',serif;font-size:13px;line-height:15px;color:#111;font-size:12px;letter-spacing:-0.15px">1000.03</div>
<div style="position:absolute;left:844px;width:600px;text-align:center;top:945px;white-space:nowrap;font-family:'Liberation Serif',serif;font-size:13px;line-height:15px;color:#111;font-size:12px;letter-spacing:-0.15px">7200.02</div>
<div style="position:absolute;left:1194px;top:945px;white-space:nowrap;font-family:'Liberation Serif',serif;font-size:13px;line-height:15px;color:#111;letter-spacing:-0.12px">Biaya Adm - Biaya Adm Bank &amp; Buku Cek/Giro</div>
<div style="position:absolute;left:1481px;top:945px;white-space:nowrap;font-family:'Liberation Serif',serif;font-size:13px;line-height:15px;color:#111;">Biaya Adm</div>
<div style="position:absolute;left:1667px;top:945px;white-space:nowrap;font-family:'Liberation Serif',serif;font-size:13px;line-height:15px;color:#111;letter-spacing:-0.14px">Biaya Adm Bank &amp; Buku Cek/Giro</div>
<div style="position:absolute;left:1012px;top:960px;width:85px;height:1px;background:#c8c8c8"></div>
<div style="position:absolute;left:1192px;top:960px;width:286px;height:1px;background:#c8c8c8"></div>
<div style="position:absolute;left:1857px;top:944px;width:41px;height:16px;border:1px solid #d4d4d4;border-right:none"></div>
<div style="position:absolute;left:0px;top:958px;width:32px;height:1px;background:#b0b0b0"></div>
<div style="position:absolute;left:0px;top:962px;width:32px;height:1px;background:#b0b0b0"></div>
<div style="position:absolute;left:0px;top:977px;width:32px;height:1px;background:#c0c0c0"></div>
<div style="position:absolute;left:-284px;width:600px;text-align:center;top:962px;white-space:nowrap;font-size:12.5px;line-height:16px;color:#2a2aa8">1264</div>
<div style="position:absolute;left:35px;top:962px;white-space:nowrap;font-family:'Liberation Serif',serif;font-size:12px;line-height:15px;color:#111;font-size:11.5px;letter-spacing:-0.28px;-webkit-text-stroke:0.2px #111">BIF TRANSFER KE 008DARA BANCA INDONESKBB</div>
<div style="position:absolute;left:302px;width:600px;text-align:right;top:962px;white-space:nowrap;font-family:'Liberation Serif',serif;font-size:12px;line-height:15px;color:#111;letter-spacing:0.45px">49.058.093,40</div>
<div style="position:absolute;left:408px;width:600px;text-align:right;top:962px;white-space:nowrap;font-family:'Liberation Serif',serif;font-size:12px;line-height:15px;color:#111;letter-spacing:0.5px">489.402.737</div>
<div style="position:absolute;left:754px;width:600px;text-align:center;top:962px;white-space:nowrap;font-family:'Liberation Serif',serif;font-size:13px;line-height:15px;color:#111;font-size:12px;letter-spacing:-0.15px">1000.03</div>
<div style="position:absolute;left:844px;width:600px;text-align:center;top:962px;white-space:nowrap;font-family:'Liberation Serif',serif;font-size:13px;line-height:15px;color:#111;font-size:12px;letter-spacing:-0.15px">5000.01</div>
<div style="position:absolute;left:1194px;top:962px;white-space:nowrap;font-family:'Liberation Serif',serif;font-size:13px;line-height:15px;color:#111;letter-spacing:-0.12px">Biaya Adm -</div>
<div style="position:absolute;left:1481px;top:962px;white-space:nowrap;font-family:'Liberation Serif',serif;font-size:13px;line-height:15px;color:#111;">Biaya Adm</div>
<div style="position:absolute;left:1012px;top:977px;width:85px;height:1px;background:#c8c8c8"></div>
<div style="position:absolute;left:1192px;top:977px;width:286px;height:1px;background:#c8c8c8"></div>
<div style="position:absolute;left:36px;width:600px;text-align:center;top:300px;white-space:nowrap;font-family:'Liberation Serif',serif;font-size:11px;line-height:15px;color:#111;-webkit-text-stroke:0.35px #111;">KETERANGAN</div>
<div style="position:absolute;left:129px;width:600px;text-align:right;top:300px;white-space:nowrap;font-family:'Liberation Serif',serif;font-size:11px;line-height:15px;color:#111;-webkit-text-stroke:0.35px #111;">DEBI</div>
<div style="position:absolute;left:287px;width:600px;text-align:right;top:300px;white-space:nowrap;font-family:'Liberation Serif',serif;font-size:11px;line-height:15px;color:#111;-webkit-text-stroke:0.35px #111;">KREDI</div>
<div style="position:absolute;left:658px;width:600px;text-align:center;top:300px;white-space:nowrap;font-family:'Liberation Serif',serif;font-size:11px;line-height:15px;color:#111;-webkit-text-stroke:0.35px #111;font-size:10.5px">JUMLAH</div>
<div style="position:absolute;left:1021px;top:299px;white-space:nowrap;font-family:'Liberation Serif',serif;font-size:13px;line-height:15px;color:#111;">COA BAN</div>
<div style="position:absolute;left:1105px;top:299px;white-space:nowrap;font-family:'Liberation Serif',serif;font-size:13px;line-height:15px;color:#111;">COA LAWA</div>
<div style="position:absolute;left:1035px;width:600px;text-align:center;top:299px;white-space:nowrap;font-family:'Liberation Serif',serif;font-size:13px;line-height:15px;color:#111;">KETERANGAN</div>
<div style="position:absolute;left:1271px;width:600px;text-align:center;top:299px;white-space:nowrap;font-family:'Liberation Serif',serif;font-size:13px;line-height:15px;color:#111;">NAMA ORANG</div>
<div style="position:absolute;left:1461px;width:600px;text-align:center;top:299px;white-space:nowrap;font-family:'Liberation Serif',serif;font-size:13px;line-height:15px;color:#111;">COA</div>
<div style="position:absolute;left:1885px;top:299px;white-space:nowrap;font-family:'Liberation Serif',serif;font-size:13px;line-height:15px;color:#111;width:8px;overflow:hidden">JU</div>
<div style="position:absolute;left:730px;top:297px;width:17px;height:16px;background:#fff;border:1px solid #c6c6c6"></div>
<svg style="position:absolute;left:734px;top:302px;" width="9" height="6" viewBox="0 0 9 6"><path d="M0.5 0.5 H8.5 L4.5 5 Z" fill="#777"/></svg>
<div style="position:absolute;left:887px;top:297px;width:17px;height:16px;background:#fff;border:1px solid #c6c6c6"></div>
<svg style="position:absolute;left:891px;top:302px;" width="9" height="6" viewBox="0 0 9 6"><path d="M0.5 0.5 H8.5 L4.5 5 Z" fill="#777"/></svg>
<div style="position:absolute;left:994px;top:297px;width:17px;height:16px;background:#fff;border:1px solid #c6c6c6"></div>
<svg style="position:absolute;left:998px;top:302px;" width="9" height="6" viewBox="0 0 9 6"><path d="M0.5 0.5 H8.5 L4.5 5 Z" fill="#777"/></svg>
<div style="position:absolute;left:1080px;top:297px;width:17px;height:16px;background:#fff;border:1px solid #c6c6c6"></div>
<svg style="position:absolute;left:1084px;top:302px;" width="9" height="6" viewBox="0 0 9 6"><path d="M0.5 0.5 H8.5 L4.5 5 Z" fill="#777"/></svg>
<div style="position:absolute;left:1174px;top:297px;width:17px;height:16px;background:#fff;border:1px solid #c6c6c6"></div>
<svg style="position:absolute;left:1178px;top:302px;" width="9" height="6" viewBox="0 0 9 6"><path d="M0.5 0.5 H8.5 L4.5 5 Z" fill="#777"/></svg>
<div style="position:absolute;left:1461px;top:297px;width:17px;height:16px;background:#fff;border:1px solid #c6c6c6"></div>
<svg style="position:absolute;left:1465px;top:302px;" width="9" height="6" viewBox="0 0 9 6"><path d="M0.5 0.5 H8.5 L4.5 5 Z" fill="#777"/></svg>
<div style="position:absolute;left:1647px;top:297px;width:17px;height:16px;background:#fff;border:1px solid #c6c6c6"></div>
<svg style="position:absolute;left:1651px;top:302px;" width="9" height="6" viewBox="0 0 9 6"><path d="M0.5 0.5 H8.5 L4.5 5 Z" fill="#777"/></svg>
<div style="position:absolute;left:1840px;top:297px;width:17px;height:16px;background:#fff;border:1px solid #c6c6c6"></div>
<svg style="position:absolute;left:1844px;top:302px;" width="9" height="6" viewBox="0 0 9 6"><path d="M0.5 0.5 H8.5 L4.5 5 Z" fill="#777"/></svg>
<div style="position:absolute;left:622px;top:297px;width:17px;height:16px;background:#fff;border:1px solid #c6c6c6"></div>
<svg style="position:absolute;left:624px;top:299px;" width="13" height="12" viewBox="0 0 13 12"><path d="M5 2 H12 L9.5 5.5 V10 H7.5 V5.5 Z" fill="#6a6a6a"/><path d="M1 8 H5 L3 10.5 Z" fill="#6a6a6a"/></svg>
<div style="position:absolute;left:1477px;top:245px;width:189px;height:20px;border:2px solid #217346"></div>
<div style="position:absolute;left:1662px;top:261px;width:6px;height:6px;background:#217346;border:1px solid #fff"></div>
<svg style="position:absolute;left:1478px;top:603px;" width="188" height="18" viewBox="0 0 188 18"><rect x="1" y="1" width="186" height="16" fill="none" stroke="#1f5f3c" stroke-width="2" stroke-dasharray="5 3"/></svg>
<div style="position:absolute;left:1898px;top:227px;width:1px;height:756px;background:#a8a8a8"></div>
<div style="position:absolute;left:1899px;top:227px;width:21px;height:756px;background:#e8e8e8"></div>
<div style="position:absolute;left:1902px;top:229px;width:15px;height:15px;background:#fff;border:1px solid #8a8a8a"></div>
<svg style="position:absolute;left:1905px;top:233px;" width="9" height="6" viewBox="0 0 9 6"><path d="M0.5 5.5 H8.5 L4.5 0.5 Z" fill="#111"/></svg>
<div style="position:absolute;left:1902px;top:244px;width:15px;height:203px;background:#fff;border:1px solid #8a8a8a;border-top:2px solid #8a8a8a"></div>
<div style="position:absolute;left:1902px;top:968px;width:15px;height:15px;background:#fff;border:1px solid #8a8a8a"></div>
<svg style="position:absolute;left:1905px;top:973px;" width="9" height="6" viewBox="0 0 9 6"><path d="M0.5 0.5 H8.5 L4.5 5.5 Z" fill="#111"/></svg>
<div style="position:absolute;left:0px;top:982px;width:1898px;height:1px;background:#9a9a9a"></div>
<div style="position:absolute;left:0px;top:983px;width:1920px;height:27px;background:#e6e6e6"></div>
<svg style="position:absolute;left:22px;top:990px;" width="10" height="12" viewBox="0 0 10 12"><path d="M7 2 L3 6 L7 10 Z" fill="#c4c4c4"/></svg>
<svg style="position:absolute;left:52px;top:990px;" width="10" height="12" viewBox="0 0 10 12"><path d="M3 2 L7 6 L3 10 Z" fill="#c4c4c4"/></svg>
<div style="position:absolute;left:100px;top:986px;width:1px;height:18px;background:#a0a0a0"></div>
<div style="position:absolute;left:401px;top:986px;width:1px;height:18px;background:#a0a0a0"></div>
<div style="position:absolute;left:626px;top:986px;width:1px;height:18px;background:#a0a0a0"></div>
<div style="position:absolute;left:691px;top:986px;width:1px;height:18px;background:#a0a0a0"></div>
<div style="position:absolute;left:853px;top:986px;width:1px;height:18px;background:#a0a0a0"></div>
<div style="position:absolute;left:140px;top:982px;width:41px;height:25px;background:#fff;border-left:1px solid #c8c8c8;border-right:1px solid #c8c8c8"></div>
<div style="position:absolute;left:141px;top:1004px;width:39px;height:3px;background:#217346"></div>
<div style="position:absolute;left:-180px;width:600px;text-align:center;top:988px;white-space:nowrap;font-size:12.8px;line-height:16px;color:#333;">RK</div>
<div style="position:absolute;left:-140px;width:600px;text-align:center;top:988px;white-space:nowrap;font-size:12.8px;line-height:16px;color:#333;color:#1e6b41;font-weight:bold">rk</div>
<div style="position:absolute;left:-10px;width:600px;text-align:center;top:988px;white-space:nowrap;font-size:12.8px;line-height:16px;color:#333;">FPK-PT Warna Media Packaging</div>
<div style="position:absolute;left:213px;width:600px;text-align:center;top:988px;white-space:nowrap;font-size:12.8px;line-height:16px;color:#333;">FPM-PT Warna Media Packaging</div>
<div style="position:absolute;left:358px;width:600px;text-align:center;top:988px;white-space:nowrap;font-size:12.8px;line-height:16px;color:#333;">Sheet4</div>
<div style="position:absolute;left:472px;width:600px;text-align:center;top:988px;white-space:nowrap;font-size:12.8px;line-height:16px;color:#333;">Bukti Potong Unifikasi</div>
<svg style="position:absolute;left:886px;top:986px;" width="18" height="18" viewBox="0 0 18 18"><circle cx="9" cy="9" r="7.5" fill="none" stroke="#666" stroke-width="1.2"/><path d="M9 5 V13 M5 9 H13" stroke="#666" stroke-width="1.4"/></svg>
<div style="position:absolute;left:1152px;top:990px;width:2px;height:2px;background:#9a9a9a"></div>
<div style="position:absolute;left:1152px;top:995px;width:2px;height:2px;background:#9a9a9a"></div>
<div style="position:absolute;left:1152px;top:1000px;width:2px;height:2px;background:#9a9a9a"></div>
<div style="position:absolute;left:1169px;top:990px;width:15px;height:14px;background:#fff;border:1px solid #8a8a8a"></div>
<svg style="position:absolute;left:1173px;top:993px;" width="6" height="9" viewBox="0 0 6 9"><path d="M5.5 0.5 V8.5 L0.5 4.5 Z" fill="#111"/></svg>
<div style="position:absolute;left:1184px;top:990px;width:700px;height:14px;background:#ececec"></div>
<div style="position:absolute;left:1346px;top:989px;width:485px;height:15px;background:#fff;border:1px solid #8a8a8a"></div>
<div style="position:absolute;left:1884px;top:990px;width:15px;height:14px;background:#fff;border:1px solid #8a8a8a"></div>
<svg style="position:absolute;left:1889px;top:993px;" width="6" height="9" viewBox="0 0 6 9"><path d="M0.5 0.5 V8.5 L5.5 4.5 Z" fill="#111"/></svg>
<div style="position:absolute;left:0px;top:1010px;width:1920px;height:1px;background:#d8d8d8"></div>
<div style="position:absolute;left:7px;top:1015px;white-space:nowrap;font-size:11.2px;line-height:15px;color:#333">Select destination and press ENTER or choose Paste</div>
<div style="position:absolute;left:1621px;top:1011px;width:39px;height:21px;background:#d6d6d6"></div>
<svg style="position:absolute;left:1630px;top:1013px;" width="18" height="16" viewBox="0 0 18 16"><rect x="1.5" y="1.5" width="15" height="13" fill="none" stroke="#555" stroke-width="1.2"/><path d="M1.5 5.8 H16.5 M1.5 10.2 H16.5 M6.5 1.5 V14.5 M11.5 1.5 V14.5" stroke="#555" stroke-width="1.1"/></svg>
<svg style="position:absolute;left:1671px;top:1013px;" width="18" height="16" viewBox="0 0 18 16"><rect x="1.5" y="1.5" width="15" height="13" fill="none" stroke="#555" stroke-width="1.2"/><rect x="4.5" y="4" width="9" height="8" fill="none" stroke="#555" stroke-width="1"/><path d="M6 6.5 H12 M6 9 H12" stroke="#555"/></svg>
<svg style="position:absolute;left:1711px;top:1013px;" width="18" height="16" viewBox="0 0 18 16"><rect x="1.5" y="1.5" width="15" height="13" fill="none" stroke="#555" stroke-width="1.2"/><path d="M6.5 1.5 V8.5 H11.5 V1.5" fill="none" stroke="#555" stroke-width="1.1"/></svg>
<div style="position:absolute;left:1746px;top:1021px;width:9px;height:1px;background:#555"></div>
<div style="position:absolute;left:1760px;top:1021px;width:100px;height:1px;background:#777"></div>
<div style="position:absolute;left:1806px;top:1015px;width:5px;height:13px;background:#444"></div>
<svg style="position:absolute;left:1862px;top:1015px;" width="12" height="12" viewBox="0 0 12 12"><path d="M6 1 V11 M1 6 H11" stroke="#555" stroke-width="1.2"/></svg>
<div style="position:absolute;left:1884px;top:1014px;white-space:nowrap;font-size:12px;line-height:15px;color:#444">100%</div>
<div style="position:absolute;left:1858px;top:978px;width:40px;height:1px;background:#d4d4d4"></div>
<svg style="position:absolute;left:20px;top:9px;" width="18" height="18" viewBox="0 0 18 18"><path d="M2.5 2.5 H13 L15.5 5 V15.5 H4.5 L2.5 13.5 Z" fill="none" stroke="#e8f3ec" stroke-width="1.3"/><rect x="5.5" y="2.5" width="7" height="4" fill="none" stroke="#e8f3ec" stroke-width="1.2"/><rect x="5.5" y="10" width="7" height="5.5" fill="none" stroke="#e8f3ec" stroke-width="1.2"/></svg>
<svg style="position:absolute;left:49px;top:9px;" width="18" height="18" viewBox="0 0 18 18"><path d="M3 3 V8 H8" fill="none" stroke="#e8f3ec" stroke-width="1.3"/><path d="M3.5 8 C5 4 11 3 13.5 7 C15.5 10.5 13 13.5 8 17" fill="none" stroke="#e8f3ec" stroke-width="1.3"/></svg>
<svg style="position:absolute;left:70px;top:13px;" width="8" height="6" viewBox="0 0 8 6"><path d="M1 1.5 L4 4.5 L7 1.5" fill="none" stroke="#e8f3ec" stroke-width="1.2"/></svg>
<svg style="position:absolute;left:88px;top:9px;" width="18" height="18" viewBox="0 0 18 18"><path d="M15 3 V8 H10" fill="none" stroke="#5f9c77" stroke-width="1.3"/><path d="M14.5 8 C13 4 7 3 4.5 7 C2.5 10.5 5 13.5 10 17" fill="none" stroke="#5f9c77" stroke-width="1.3"/></svg>
<svg style="position:absolute;left:109px;top:13px;" width="8" height="6" viewBox="0 0 8 6"><path d="M1 1.5 L4 4.5 L7 1.5" fill="none" stroke="#5f9c77" stroke-width="1.2"/></svg>
<svg style="position:absolute;left:130px;top:12px;" width="11" height="10" viewBox="0 0 11 10"><path d="M1 1 H10" stroke="#e8f3ec" stroke-width="1.2"/><path d="M2 4 L5.5 7.5 L9 4" fill="none" stroke="#e8f3ec" stroke-width="1.2"/></svg>
<div style="position:absolute;left:230px;top:10px;white-space:nowrap;font-size:12px;line-height:16px;color:#fff;letter-spacing:-0.27px">Output PT Warna Media Packaging Utama_Bank BCA 698_Januari-Desember 2025&nbsp; -&nbsp; Excel</div>
<div style="position:absolute;left:784px;top:5px;width:368px;height:23px;background:#a0ceb2"></div>
<svg style="position:absolute;left:800px;top:7px;" width="20" height="20" viewBox="0 0 20 20"><circle cx="11.5" cy="8" r="4.5" fill="none" stroke="#23553a" stroke-width="1.2"/><path d="M8.3 11.2 L3.5 16" stroke="#23553a" stroke-width="1.3"/></svg>
<div style="position:absolute;left:834px;top:9px;white-space:nowrap;font-size:12.5px;line-height:16px;color:#1d4a31">Search</div>
<div style="position:absolute;left:1622px;top:7px;width:58px;height:19px;background:#fff"></div>
<div style="position:absolute;left:1633px;top:10px;white-space:nowrap;font-size:13px;line-height:16px;color:#1f5c3a">Sign in</div>
<svg style="position:absolute;left:1703px;top:7px;" width="22" height="20" viewBox="0 0 22 20"><path d="M4 15 L12 5 L16 11 L6 17 Z" fill="none" stroke="#eaf4ee" stroke-width="1.3" stroke-linejoin="round"/><path d="M6 17 L7.5 18.5 L10 16" fill="none" stroke="#eaf4ee" stroke-width="1.2"/><path d="M15 4 L16.5 2 M18 6 L20 5 M17 8.5 L19.5 9" stroke="#eaf4ee" stroke-width="1.1"/></svg>
<svg style="position:absolute;left:1751px;top:9px;" width="16" height="14" viewBox="0 0 16 14"><rect x="1.5" y="1.5" width="13" height="10.5" fill="none" stroke="#eaf4ee" stroke-width="1.2"/><path d="M1.5 4.5 H14.5" stroke="#eaf4ee" stroke-width="1.1"/><path d="M8 10.5 V6 M6 8 L8 6 L10 8" fill="none" stroke="#eaf4ee" stroke-width="1.1"/></svg>
<div style="position:absolute;left:1800px;top:15px;width:15px;height:1px;background:#eaf4ee"></div>
<svg style="position:absolute;left:1844px;top:9px;" width="14" height="14" viewBox="0 0 14 14"><rect x="1.5" y="3.5" width="9" height="9" fill="none" stroke="#eaf4ee" stroke-width="1.1"/><path d="M3.5 3.5 V1.5 H12.5 V10.5 H10.5" fill="none" stroke="#eaf4ee" stroke-width="1.1"/></svg>
<svg style="position:absolute;left:1889px;top:9px;" width="14" height="14" viewBox="0 0 14 14"><path d="M1.5 1.5 L12.5 12.5 M12.5 1.5 L1.5 12.5" stroke="#eaf4ee" stroke-width="1.2"/></svg>
<div style="position:absolute;left:0px;top:34px;width:1920px;height:1px;background:#e7efe9"></div>
<div style="position:absolute;left:17px;top:42px;white-space:nowrap;font-size:13.5px;line-height:16px;color:#3b3b3b">File</div>
<div style="position:absolute;left:68px;top:42px;white-space:nowrap;font-size:13.5px;line-height:16px;color:#262626;font-weight:normal;-webkit-text-stroke:0.35px #262626">Home</div>
<div style="position:absolute;left:133px;top:42px;white-space:nowrap;font-size:13.5px;line-height:16px;color:#3b3b3b">Insert</div>
<div style="position:absolute;left:193px;top:42px;white-space:nowrap;font-size:13.5px;line-height:16px;color:#3b3b3b">Draw</div>
<div style="position:absolute;left:254px;top:42px;white-space:nowrap;font-size:13.5px;line-height:16px;color:#3b3b3b">Page Layout</div>
<div style="position:absolute;left:355px;top:42px;white-space:nowrap;font-size:13.5px;line-height:16px;color:#3b3b3b">Formulas</div>
<div style="position:absolute;left:437px;top:42px;white-space:nowrap;font-size:13.5px;line-height:16px;color:#3b3b3b">Data</div>
<div style="position:absolute;left:493px;top:42px;white-space:nowrap;font-size:13.5px;line-height:16px;color:#3b3b3b">Review</div>
<div style="position:absolute;left:561px;top:42px;white-space:nowrap;font-size:13.5px;line-height:16px;color:#3b3b3b">View</div>
<div style="position:absolute;left:616px;top:42px;white-space:nowrap;font-size:13.5px;line-height:16px;color:#3b3b3b">Help</div>
<div style="position:absolute;left:672px;top:42px;white-space:nowrap;font-size:13.5px;line-height:16px;color:#3b3b3b">Nitro Pro</div>
<div style="position:absolute;left:68px;top:58px;width:38px;height:3px;background:#217346"></div>
<div style="position:absolute;left:1828px;top:38px;width:79px;height:22px;background:#fbfafa;border:1px solid #e1dfdd"></div>
<svg style="position:absolute;left:1834px;top:41px;" width="16" height="16" viewBox="0 0 16 16"><path d="M2.5 6.5 V13.5 H12.5 V10.5" fill="none" stroke="#2d6e48" stroke-width="1.1"/><path d="M5 11 C5 7 8 5 12 5 M10 2.5 L12.8 5 L10 7.5" fill="none" stroke="#2d6e48" stroke-width="1.1"/></svg>
<div style="position:absolute;left:1851px;top:41px;white-space:nowrap;font-size:13.5px;line-height:16px;color:#1e5e3b;-webkit-text-stroke:0.3px #1e5e3b">Share</div>
<svg style="position:absolute;left:1892px;top:45px;" width="9" height="6" viewBox="0 0 9 6"><path d="M1 1 L4.5 4.5 L8 1" fill="none" stroke="#444" stroke-width="1.1"/></svg>
<div style="position:absolute;left:0px;top:1032px;width:1920px;height:1px;background:#d7d2c4"></div>
<svg style="position:absolute;left:17px;top:1040px;" width="32" height="30" viewBox="0 0 32 30"><defs><linearGradient id="cl" x1="0" y1="0" x2="0" y2="1"><stop offset="0" stop-color="#cfe2f7"/><stop offset="1" stop-color="#8fb3dd"/></linearGradient></defs><path d="M5 25 C1 25 1 19 5.5 19 C6 15 11 13.5 14 16 C16 12.5 23 13 23.5 18.5 C27.5 18.5 28 25 24 25 Z" fill="url(#cl)" stroke="#9cb8d8" stroke-width="0.6"/><circle cx="21" cy="7.5" r="6.8" fill="#c4262e"/></svg>
<div style="position:absolute;left:35px;top:1041px;white-space:nowrap;font-size:11px;line-height:13px;color:#fff;width:8px;text-align:center">2</div>
<div style="position:absolute;left:50px;top:1041px;white-space:nowrap;font-size:12px;line-height:14px;color:#1e1e1e">28°C</div>
<div style="position:absolute;left:50px;top:1057px;white-space:nowrap;font-size:12px;line-height:14px;color:#474747">Berawan</div>
<svg style="position:absolute;left:638px;top:1045px;" width="25" height="24" viewBox="0 0 25 24"><defs><linearGradient id="wl" x1="0" y1="0" x2="1" y2="1"><stop offset="0" stop-color="#35b8f2"/><stop offset="1" stop-color="#0a6bd0"/></linearGradient></defs><rect x="0.5" y="0.5" width="11" height="11" fill="url(#wl)"/><rect x="12.8" y="0.5" width="11" height="11" fill="url(#wl)"/><rect x="0.5" y="12.5" width="11" height="11" fill="url(#wl)"/><rect x="12.8" y="12.5" width="11" height="11" fill="url(#wl)"/></svg>
<div style="position:absolute;left:677px;top:1041px;width:217px;height:30px;background:#f6f1e4;border:1px solid #e2dccb;border-radius:15px"></div>
<svg style="position:absolute;left:685px;top:1047px;" width="18" height="18" viewBox="0 0 18 18"><circle cx="7.5" cy="7.5" r="5.5" fill="none" stroke="#222" stroke-width="1.7"/><path d="M11.5 11.5 L15.5 15.5" stroke="#222" stroke-width="1.9" stroke-linecap="round"/></svg>
<div style="position:absolute;left:712px;top:1047px;white-space:nowrap;font-size:14px;line-height:17px;color:#5a5a5a">Search</div>
<svg style="position:absolute;left:846px;top:1043px;" width="44" height="26" viewBox="0 0 44 26"><ellipse cx="22" cy="22.5" rx="18" ry="3" fill="#e3c59d"/><path d="M8 6 L12 4 L14 8 L16 10 L31 10 C35 10 36 13 35 16 L34 22 L32 22 L32 16 L19 16 L18 22 L16 22 L16 14 L13 11 L9 10 Z" fill="#efefef" stroke="#333" stroke-width="0.9"/><path d="M19 10 L20 16 M23 10 L23 16 M27 10 L27 16 M31 10 L30 16 M14 8 L12 11" stroke="#4a4a7a" stroke-width="1.2"/><path d="M35 12 L38 19" stroke="#333" stroke-width="1"/></svg>
<svg style="position:absolute;left:906px;top:1044px;" width="26" height="24" viewBox="0 0 26 24"><rect x="7" y="2" width="16" height="15" fill="#e0e0e0" stroke="#f4f4f4"/><rect x="2" y="7" width="16" height="15" fill="#2a2a2a"/><rect x="6" y="7" width="12" height="11" fill="#c8c8c8"/></svg>
<svg style="position:absolute;left:948px;top:1043px;" width="28" height="28" viewBox="0 0 28 28"><defs><linearGradient id="cp" x1="0" y1="0" x2="1" y2="1"><stop offset="0" stop-color="#3bd46f"/><stop offset="0.35" stop-color="#1e9ae8"/><stop offset="0.7" stop-color="#c23cd6"/><stop offset="1" stop-color="#ff8a3a"/></linearGradient></defs><path d="M9 3 H17 C20 3 21 5 20 8 L16 22 C15 25 13 26 10 26 H5 C3 26 2 24 3 22 L8 6 C8.5 4 9 3 11 3 Z" fill="url(#cp)"/><path d="M12 4 H20 C24 4 26 6 25 9 L21 22 C20 25 18 26 16 26" fill="none" stroke="url(#cp)" stroke-width="5"/></svg>
<svg style="position:absolute;left:993px;top:1044px;" width="28" height="26" viewBox="0 0 28 26"><path d="M2 4 H11 L13 6.5 H25 V23 H2 Z" fill="#f2b632"/><rect x="2" y="9" width="24" height="15" fill="#ffd35a"/><rect x="8" y="16" width="13" height="7" fill="#1d80c8"/></svg>
<div style="position:absolute;left:1002px;top:1073px;width:8px;height:2px;background:#777;border-radius:1px"></div>
<svg style="position:absolute;left:1037px;top:1043px;" width="28" height="28" viewBox="0 0 28 28"><defs><linearGradient id="ed" x1="0" y1="0" x2="1" y2="1"><stop offset="0" stop-color="#40c46a"/><stop offset="0.5" stop-color="#1a8ae0"/><stop offset="1" stop-color="#0c4fa8"/></linearGradient></defs><circle cx="14" cy="14" r="12" fill="url(#ed)"/><path d="M6 16 C6 9 20 8 22 15 C18 12 12 13 12 18 C12 22 16 24 21 23 C16 27 6 24 6 16 Z" fill="#f2f2f2" opacity="0.85"/><circle cx="11" cy="20" r="3" fill="#8a7a6a"/></svg>
<svg style="position:absolute;left:1081px;top:1043px;" width="28" height="28" viewBox="0 0 28 28"><path d="M9 6 V4 C9 2 19 2 19 4 V6" fill="none" stroke="#2f6fc6" stroke-width="1.8"/><rect x="3" y="6" width="22" height="19" rx="3" fill="#1f4fa0"/><rect x="10" y="11" width="4" height="4" fill="#f25022"/><rect x="14.5" y="11" width="4" height="4" fill="#7fba00"/><rect x="10" y="15.5" width="4" height="4" fill="#00a4ef"/><rect x="14.5" y="15.5" width="4" height="4" fill="#ffb900"/></svg>
<svg style="position:absolute;left:1126px;top:1043px;" width="28" height="28" viewBox="0 0 28 28"><circle cx="14" cy="14" r="12" fill="#e03345"/><path d="M8 20 L14 7 L20 20" fill="none" stroke="#fff" stroke-width="2.4"/></svg>
<div style="position:absolute;left:1135px;top:1073px;width:8px;height:2px;background:#777;border-radius:1px"></div>
<svg style="position:absolute;left:1169px;top:1041px;" width="32" height="32" viewBox="0 0 32 32"><path d="M15 4 C8 4 3 9 3 16 C3 18.5 3.8 20.5 5 22.5 L3.5 28 L9 26.5 C11 27.6 13 28 15 28 C22 28 27 23 27 16 C27 9 22 4 15 4 Z" fill="none" stroke="#2aa455" stroke-width="2.2"/><path d="M10 11 C10 17 14 21 20 21 L21 18.5 L18 17 L16.5 18.5 C14.5 17.5 13 16 12 14 L13.5 12.5 L12 9.5 Z" fill="#2aa455"/><circle cx="24.5" cy="7" r="6.3" fill="#1a73d9"/></svg>
<div style="position:absolute;left:1191px;top:1040px;white-space:nowrap;font-size:11px;line-height:13px;color:#fff;width:8px;text-align:center">8</div>
<svg style="position:absolute;left:1213px;top:1045px;" width="28" height="22" viewBox="0 0 28 22"><rect x="1" y="1" width="26" height="20" rx="2" fill="#3a3a3a"/><rect x="1" y="1" width="26" height="3" fill="#555"/><path d="M5 8 L9 11 L5 14" fill="none" stroke="#eee" stroke-width="1.6"/><path d="M11 15 H17" stroke="#eee" stroke-width="1.6"/></svg>
<div style="position:absolute;left:1223px;top:1073px;width:8px;height:2px;background:#777;border-radius:1px"></div>
<div style="position:absolute;left:1252px;top:1038px;width:38px;height:39px;background:rgba(255,255,255,0.45);border-radius:4px"></div>
<svg style="position:absolute;left:1258px;top:1044px;" width="27" height="26" viewBox="0 0 27 26"><rect x="7" y="1" width="19" height="24" rx="2" fill="#1b8f50"/><rect x="7" y="1" width="19" height="8" fill="#33c481"/><rect x="7" y="9" width="19" height="8" fill="#21a366"/><rect x="7" y="17" width="19" height="8" fill="#107c41"/><rect x="1" y="6" width="13" height="14" rx="1.5" fill="#185c37"/><path d="M4.5 9 L10.5 17 M10.5 9 L4.5 17" stroke="#fff" stroke-width="1.7"/></svg>
<div style="position:absolute;left:1264px;top:1072px;width:14px;height:3px;background:#0f6cc7;border-radius:2px"></div>
<svg style="position:absolute;left:1749px;top:1050px;" width="16" height="10" viewBox="0 0 16 10"><path d="M2 8 L8 2.5 L14 8" fill="none" stroke="#222" stroke-width="1.3"/></svg>
<svg style="position:absolute;left:1780px;top:1046px;" width="20" height="20" viewBox="0 0 20 20"><rect x="2" y="3" width="12" height="10" fill="none" stroke="#222" stroke-width="1.2"/><path d="M5 16.5 H12 M8 13 V16.5" stroke="#222" stroke-width="1.2"/><rect x="14.5" y="1.5" width="3" height="4" fill="none" stroke="#222" stroke-width="1"/><path d="M16 5.5 V16" stroke="#222" stroke-width="1.2"/></svg>
<svg style="position:absolute;left:1804px;top:1047px;" width="20" height="18" viewBox="0 0 20 18"><path d="M2 6.5 H5 L9 3 V15 L5 11.5 H2 Z" fill="none" stroke="#222" stroke-width="1.2"/><path d="M11.5 6 C13 7.5 13 10.5 11.5 12 M14 4 C16.5 6.5 16.5 11.5 14 14 M16.5 2.5 C20 6 20 12 16.5 15.5" fill="none" stroke="#222" stroke-width="1.1"/></svg>
<div style="position:absolute;left:1301px;width:600px;text-align:right;top:1041px;white-space:nowrap;font-size:12px;line-height:14px;color:#1e1e1e">10:32</div>
<div style="position:absolute;left:1301px;width:600px;text-align:right;top:1057px;white-space:nowrap;font-size:12px;line-height:14px;color:#1e1e1e">31/01/2026</div>
<div style="position:absolute;left:164px;top:68px;width:1px;height:88px;background:#c8c6c4"></div>
<div style="position:absolute;left:396px;top:68px;width:1px;height:88px;background:#c8c6c4"></div>
<div style="position:absolute;left:676px;top:68px;width:1px;height:88px;background:#c8c6c4"></div>
<div style="position:absolute;left:832px;top:68px;width:1px;height:88px;background:#c8c6c4"></div>
<div style="position:absolute;left:1532px;top:68px;width:1px;height:88px;background:#c8c6c4"></div>
<div style="position:absolute;left:1675px;top:68px;width:1px;height:88px;background:#c8c6c4"></div>
<div style="position:absolute;left:1875px;top:68px;width:1px;height:88px;background:#c8c6c4"></div>
<div style="position:absolute;left:-225px;width:600px;text-align:center;top:146px;white-space:nowrap;font-size:12px;line-height:15px;color:#2b2b2b;color:#444">Clipboard</div>
<div style="position:absolute;left:-26px;width:600px;text-align:center;top:146px;white-space:nowrap;font-size:12px;line-height:15px;color:#2b2b2b;color:#444">Font</div>
<div style="position:absolute;left:229px;width:600px;text-align:center;top:146px;white-space:nowrap;font-size:12px;line-height:15px;color:#2b2b2b;color:#444">Alignment</div>
<div style="position:absolute;left:447px;width:600px;text-align:center;top:146px;white-space:nowrap;font-size:12px;line-height:15px;color:#2b2b2b;color:#444">Number</div>
<div style="position:absolute;left:882px;width:600px;text-align:center;top:146px;white-space:nowrap;font-size:12px;line-height:15px;color:#2b2b2b;color:#444">Styles</div>
<div style="position:absolute;left:1304px;width:600px;text-align:center;top:146px;white-space:nowrap;font-size:12px;line-height:15px;color:#2b2b2b;color:#444">Cells</div>
<div style="position:absolute;left:1475px;width:600px;text-align:center;top:146px;white-space:nowrap;font-size:12px;line-height:15px;color:#2b2b2b;color:#444">Editing</div>
<svg style="position:absolute;left:153px;top:148px;" width="9" height="9" viewBox="0 0 9 9"><path d="M0.5 0.5 H5 M0.5 0.5 V5" fill="none" stroke="#555" stroke-width="1"/><path d="M3 3 L8 8 M8 4 V8 H4" fill="none" stroke="#555" stroke-width="1"/></svg>
<svg style="position:absolute;left:385px;top:148px;" width="9" height="9" viewBox="0 0 9 9"><path d="M0.5 0.5 H5 M0.5 0.5 V5" fill="none" stroke="#555" stroke-width="1"/><path d="M3 3 L8 8 M8 4 V8 H4" fill="none" stroke="#555" stroke-width="1"/></svg>
<svg style="position:absolute;left:665px;top:148px;" width="9" height="9" viewBox="0 0 9 9"><path d="M0.5 0.5 H5 M0.5 0.5 V5" fill="none" stroke="#555" stroke-width="1"/><path d="M3 3 L8 8 M8 4 V8 H4" fill="none" stroke="#555" stroke-width="1"/></svg>
<svg style="position:absolute;left:820px;top:148px;" width="9" height="9" viewBox="0 0 9 9"><path d="M0.5 0.5 H5 M0.5 0.5 V5" fill="none" stroke="#555" stroke-width="1"/><path d="M3 3 L8 8 M8 4 V8 H4" fill="none" stroke="#555" stroke-width="1"/></svg>
<svg style="position:absolute;left:1900px;top:149px;" width="14" height="9" viewBox="0 0 14 9"><path d="M2 7 L7 2 L12 7" fill="none" stroke="#444" stroke-width="1.2"/></svg>
<svg style="position:absolute;left:15px;top:70px;" width="34" height="34" viewBox="0 0 34 34"><rect x="3.5" y="5.5" width="20" height="23" fill="#fdf3e6" stroke="#e8912d" stroke-width="1.6"/><path d="M8 7.5 V4.5 H11 C11 1.5 16 1.5 16 4.5 H19 V7.5 Z" fill="#f3f0f7" stroke="#555" stroke-width="1.1"/><rect x="16.5" y="14.5" width="13.5" height="17" fill="#fff" stroke="#333" stroke-width="1.3"/></svg>
<div style="position:absolute;left:16px;top:106px;white-space:nowrap;font-size:12.5px;line-height:15px;color:#333;letter-spacing:-0.6px">Paste</div>
<svg style="position:absolute;left:25px;top:125px;" width="8" height="6" viewBox="0 0 8 6"><path d="M1 1 L4 4 L7 1" fill="none" stroke="#444" stroke-width="1.1"/></svg>
<svg style="position:absolute;left:54px;top:70px;" width="16" height="18" viewBox="0 0 16 18"><path d="M4 1 L11 11 M12 1 L5 11" stroke="#333" stroke-width="1.1"/><circle cx="4" cy="14" r="2.3" fill="none" stroke="#2b7bc0" stroke-width="1.2"/><circle cx="12" cy="14" r="2.3" fill="none" stroke="#2b7bc0" stroke-width="1.2"/></svg>
<div style="position:absolute;left:73px;top:73px;white-space:nowrap;font-size:12px;line-height:15px;color:#2b2b2b;">Cut</div>
<svg style="position:absolute;left:52px;top:94px;" width="18" height="18" viewBox="0 0 18 18"><path d="M7 2.5 H3 V13.5 H7" fill="none" stroke="#333" stroke-width="1.1"/><path d="M7.5 4.5 H13 L16 7.5 V17 H7.5 Z" fill="#fff" stroke="#333" stroke-width="1.1"/><path d="M10 12 H14 M10 14.5 H14" stroke="#333" stroke-width="0.9"/></svg>
<div style="position:absolute;left:73px;top:97px;white-space:nowrap;font-size:12px;line-height:15px;color:#2b2b2b;">Copy</div>
<svg style="position:absolute;left:109px;top:101px;" width="8" height="6" viewBox="0 0 8 6"><path d="M1 1 L4 4 L7 1" fill="none" stroke="#444" stroke-width="1.1"/></svg>
<svg style="position:absolute;left:52px;top:117px;" width="20" height="20" viewBox="0 0 20 20"><g transform="translate(1.5 1) scale(0.86)"><path d="M11.5 8.5 L16.5 3.5 C17.5 2.5 19 4 18 5 L13 10 Z" fill="#fff" stroke="#333" stroke-width="1.1"/><path d="M9 8 L14 13 L12.5 14.5 L7.5 9.5 Z" fill="#4a5a6a" stroke="#333" stroke-width="0.8"/><path d="M7.5 9.5 L12.5 14.5 C11 17 8 18.5 3.5 19 C2.5 17 2 12.5 7.5 9.5 Z" fill="#f3b658" stroke="#e58a1f" stroke-width="1.1"/><path d="M5 14 L8.5 17 M6.5 12 L10.5 15.5" stroke="#e58a1f" stroke-width="0.8"/></g></svg>
<div style="position:absolute;left:73px;top:121px;white-space:nowrap;font-size:12px;line-height:15px;color:#2b2b2b;letter-spacing:-0.15px">Format Painter</div>
<div style="position:absolute;left:173px;top:76px;width:123px;height:23px;background:#fff;border:1px solid #c8c6c4"></div>
<div style="position:absolute;left:177px;top:81px;white-space:nowrap;font-size:12px;line-height:15px;color:#2b2b2b;color:#222;letter-spacing:-0.25px">Times New Roman</div>
<svg style="position:absolute;left:285px;top:85px;" width="8" height="6" viewBox="0 0 8 6"><path d="M1 1 L4 4 L7 1" fill="none" stroke="#444" stroke-width="1.1"/></svg>
<div style="position:absolute;left:298px;top:76px;width:43px;height:23px;background:#fff;border:1px solid #c8c6c4"></div>
<div style="position:absolute;left:302px;top:81px;white-space:nowrap;font-size:12px;line-height:15px;color:#2b2b2b;color:#222">10</div>
<svg style="position:absolute;left:330px;top:85px;" width="8" height="6" viewBox="0 0 8 6"><path d="M1 1 L4 4 L7 1" fill="none" stroke="#444" stroke-width="1.1"/></svg>
<svg style="position:absolute;left:345px;top:78px;" width="20" height="16" viewBox="0 0 20 16"><path d="M1.5 14 L7 1.5 L12.5 14 M3.5 9.5 H10.5" fill="none" stroke="#333" stroke-width="1.2"/><path d="M13.5 4.5 L16 2 L18.5 4.5" fill="none" stroke="#2b7bc0" stroke-width="1.1"/></svg>
<svg style="position:absolute;left:371px;top:80px;" width="20" height="14" viewBox="0 0 20 14"><path d="M1.5 12 L6 1.5 L10.5 12 M3 8 H9" fill="none" stroke="#333" stroke-width="1.2"/><path d="M13 1.5 L15.5 4 L18 1.5" fill="none" stroke="#2b7bc0" stroke-width="1.1"/></svg>
<div style="position:absolute;left:180px;top:110px;white-space:nowrap;font-size:14px;line-height:16px;color:#333;font-weight:bold">B</div>
<div style="position:absolute;left:203px;top:110px;white-space:nowrap;font-family:'Liberation Serif',serif;font-size:15px;line-height:16px;color:#333;font-style:italic">I</div>
<div style="position:absolute;left:227px;top:110px;white-space:nowrap;font-size:13px;line-height:15px;color:#333">U</div>
<div style="position:absolute;left:227px;top:125px;width:9px;height:1px;background:#333"></div>
<svg style="position:absolute;left:245px;top:116px;" width="8" height="6" viewBox="0 0 8 6"><path d="M1 1 L4 4 L7 1" fill="none" stroke="#444" stroke-width="1.1"/></svg>
<div style="position:absolute;left:262px;top:106px;width:1px;height:24px;background:#c8c6c4"></div>
<svg style="position:absolute;left:268px;top:110px;" width="19" height="18" viewBox="0 0 19 18"><path d="M2 2 H17 M2 2 V15 M17 2 V15 M9.5 2 V15 M2 8.5 H17" stroke="#555" stroke-width="1" stroke-dasharray="1 1.2"/><path d="M2 16 H17" stroke="#222" stroke-width="1.6"/></svg>
<svg style="position:absolute;left:291px;top:116px;" width="8" height="6" viewBox="0 0 8 6"><path d="M1 1 L4 4 L7 1" fill="none" stroke="#444" stroke-width="1.1"/></svg>
<div style="position:absolute;left:308px;top:106px;width:1px;height:24px;background:#c8c6c4"></div>
<svg style="position:absolute;left:314px;top:109px;" width="20" height="20" viewBox="0 0 20 20"><path d="M3 8 L8 3 L13 8 L9 12 C8 13 6 13 5 12 Z" fill="none" stroke="#333" stroke-width="1.1"/><path d="M13 8 C16 7 17 10 16 12" fill="none" stroke="#2b7bc0" stroke-width="1.2"/><rect x="2" y="14" width="16" height="4" fill="#f7f21c"/></svg>
<svg style="position:absolute;left:337px;top:116px;" width="8" height="6" viewBox="0 0 8 6"><path d="M1 1 L4 4 L7 1" fill="none" stroke="#444" stroke-width="1.1"/></svg>
<svg style="position:absolute;left:353px;top:108px;" width="20" height="21" viewBox="0 0 20 21"><path d="M3 14 L9 2 L15 14 M5 10 H13" fill="none" stroke="#333" stroke-width="1.2"/><rect x="2" y="16" width="16" height="3.5" fill="#e00a1a"/></svg>
<svg style="position:absolute;left:376px;top:116px;" width="8" height="6" viewBox="0 0 8 6"><path d="M1 1 L4 4 L7 1" fill="none" stroke="#444" stroke-width="1.1"/></svg>
<svg style="position:absolute;left:409px;top:78px;" width="14" height="16" viewBox="0 0 14 16"><path d="M0 1.5 H14" stroke="#333" stroke-width="1.1"/><path d="M2 5.5 H12" stroke="#333" stroke-width="1.1"/><path d="M0 9.5 H14" stroke="#333" stroke-width="1.1"/></svg>
<svg style="position:absolute;left:433px;top:80px;" width="14" height="16" viewBox="0 0 14 16"><path d="M0 2.5 H14" stroke="#333" stroke-width="1.1"/><path d="M2 6.5 H12" stroke="#333" stroke-width="1.1"/><path d="M0 10.5 H14" stroke="#333" stroke-width="1.1"/></svg>
<div style="position:absolute;left:453px;top:76px;width:22px;height:22px;background:#d2d0ce;border:1px solid #a8a6a4"></div>
<svg style="position:absolute;left:457px;top:84px;" width="14" height="16" viewBox="0 0 14 16"><path d="M2 2.5 H12" stroke="#333" stroke-width="1.1"/><path d="M0 6.5 H14" stroke="#333" stroke-width="1.1"/><path d="M0 10.5 H14" stroke="#333" stroke-width="1.1"/></svg>
<div style="position:absolute;left:480px;top:77px;width:1px;height:20px;background:#c8c6c4"></div>
<svg style="position:absolute;left:486px;top:78px;" width="20" height="18" viewBox="0 0 20 18"><text x="1" y="11" font-size="9" font-family="Liberation Sans" fill="#333" transform="rotate(-45 6 8)">ab</text><path d="M6 16 L16 5 M12 5 H16 V9" fill="none" stroke="#2b7bc0" stroke-width="1.2"/></svg>
<svg style="position:absolute;left:506px;top:85px;" width="8" height="6" viewBox="0 0 8 6"><path d="M1 1 L4 4 L7 1" fill="none" stroke="#444" stroke-width="1.1"/></svg>
<div style="position:absolute;left:535px;top:72px;width:1px;height:60px;background:#c8c6c4"></div>
<svg style="position:absolute;left:543px;top:79px;" width="18" height="17" viewBox="0 0 18 17"><text x="1" y="8" font-size="9" font-family="Liberation Sans" fill="#333">ab</text><text x="1" y="16" font-size="9" font-family="Liberation Sans" fill="#333">c</text><path d="M9 13 H15 C17 13 17 9 15 9 M10 11 L8 13 L10 15" fill="none" stroke="#2b7bc0" stroke-width="1.1"/></svg>
<div style="position:absolute;left:562px;top:81px;white-space:nowrap;font-size:12px;line-height:15px;color:#2b2b2b;">Wrap Text</div>
<svg style="position:absolute;left:409px;top:111px;" width="14" height="16" viewBox="0 0 14 16"><path d="M0 1.5 H14" stroke="#333" stroke-width="1.1"/><path d="M0 5.5 H10" stroke="#333" stroke-width="1.1"/><path d="M0 9.5 H14" stroke="#333" stroke-width="1.1"/><path d="M0 13.5 H10" stroke="#333" stroke-width="1.1"/></svg>
<svg style="position:absolute;left:433px;top:111px;" width="14" height="16" viewBox="0 0 14 16"><path d="M0 1.5 H14" stroke="#333" stroke-width="1.1"/><path d="M2 5.5 H12" stroke="#333" stroke-width="1.1"/><path d="M0 9.5 H14" stroke="#333" stroke-width="1.1"/><path d="M2 13.5 H12" stroke="#333" stroke-width="1.1"/></svg>
<svg style="position:absolute;left:457px;top:111px;" width="14" height="16" viewBox="0 0 14 16"><path d="M0 1.5 H14" stroke="#333" stroke-width="1.1"/><path d="M4 5.5 H14" stroke="#333" stroke-width="1.1"/><path d="M0 9.5 H14" stroke="#333" stroke-width="1.1"/><path d="M4 13.5 H14" stroke="#333" stroke-width="1.1"/></svg>
<div style="position:absolute;left:480px;top:109px;width:1px;height:21px;background:#c8c6c4"></div>
<svg style="position:absolute;left:487px;top:111px;" width="16" height="16" viewBox="0 0 16 16"><path d="M6 1.5 H15 M8 5.5 H15 M8 9.5 H15 M1 13.5 H15" stroke="#333" stroke-width="1.1"/><path d="M6 7.5 H1 M3.5 5 L1 7.5 L3.5 10" fill="none" stroke="#2b7bc0" stroke-width="1.1"/></svg>
<svg style="position:absolute;left:511px;top:111px;" width="16" height="16" viewBox="0 0 16 16"><path d="M1 1.5 H15 M8 5.5 H15 M8 9.5 H15 M1 13.5 H15" stroke="#333" stroke-width="1.1"/><path d="M1 7.5 H6 M3.5 5 L6 7.5 L3.5 10" fill="none" stroke="#2b7bc0" stroke-width="1.1"/></svg>
<svg style="position:absolute;left:541px;top:110px;" width="17" height="17" viewBox="0 0 17 17"><rect x="1" y="1" width="15" height="15" fill="#fff" stroke="#2b7bc0" stroke-width="1.2"/><path d="M1 5 H16 M1 12 H16 M6 1 V5 M11 1 V5 M6 12 V16 M11 12 V16" stroke="#2b7bc0" stroke-width="0.9"/><path d="M3.5 8.5 H13.5 M5.5 6.5 L3.5 8.5 L5.5 10.5 M11.5 6.5 L13.5 8.5 L11.5 10.5" fill="none" stroke="#2b7bc0" stroke-width="1"/></svg>
<div style="position:absolute;left:562px;top:113px;white-space:nowrap;font-size:12px;line-height:15px;color:#2b2b2b;letter-spacing:-0.05px">Merge &amp; Center</div>
<svg style="position:absolute;left:655px;top:116px;" width="8" height="6" viewBox="0 0 8 6"><path d="M1 1 L4 4 L7 1" fill="none" stroke="#444" stroke-width="1.1"/></svg>
<div style="position:absolute;left:685px;top:76px;width:140px;height:23px;background:#fff;border:1px solid #c8c6c4"></div>
<div style="position:absolute;left:688px;top:81px;white-space:nowrap;font-size:12px;line-height:15px;color:#2b2b2b;color:#222">General</div>
<svg style="position:absolute;left:814px;top:85px;" width="8" height="6" viewBox="0 0 8 6"><path d="M1 1 L4 4 L7 1" fill="none" stroke="#444" stroke-width="1.1"/></svg>
<svg style="position:absolute;left:687px;top:112px;" width="20" height="16" viewBox="0 0 20 16"><rect x="1" y="1.5" width="14" height="10" fill="#fff" stroke="#333" stroke-width="1.1"/><text x="2.5" y="10" font-size="8" font-family="Liberation Sans" fill="#333">C</text><ellipse cx="15" cy="9" rx="3.5" ry="1.5" fill="#fbe3c1" stroke="#e8912d"/><path d="M11.5 9 V14 C11.5 15.5 18.5 15.5 18.5 14 V9" fill="#fbe3c1" stroke="#e8912d"/></svg>
<svg style="position:absolute;left:710px;top:116px;" width="8" height="6" viewBox="0 0 8 6"><path d="M1 1 L4 4 L7 1" fill="none" stroke="#444" stroke-width="1.1"/></svg>
<div style="position:absolute;left:728px;top:110px;white-space:nowrap;font-size:16px;line-height:18px;color:#333">%</div>
<svg style="position:absolute;left:754px;top:111px;" width="12" height="16" viewBox="0 0 12 16"><circle cx="6" cy="5" r="3.6" fill="#222"/><path d="M8.8 6 C9 10 7 13 3.5 14.5 L3 13.5 C5.5 12 6.5 10 6.5 7.5 Z" fill="#222"/></svg>
<div style="position:absolute;left:774px;top:108px;width:1px;height:22px;background:#c8c6c4"></div>
<svg style="position:absolute;left:781px;top:111px;" width="18" height="17" viewBox="0 0 18 17"><text x="9" y="7.5" font-size="8" font-family="Liberation Sans" fill="#333">0</text><text x="5" y="15.5" font-size="8" font-family="Liberation Sans" fill="#333">.00</text><path d="M9 4.5 H2 M4.5 2 L2 4.5 L4.5 7" fill="none" stroke="#2b7bc0" stroke-width="1.1"/></svg>
<svg style="position:absolute;left:803px;top:111px;" width="19" height="17" viewBox="0 0 19 17"><text x="4" y="7.5" font-size="8" font-family="Liberation Sans" fill="#333">.00</text><text x="12" y="15.5" font-size="8" font-family="Liberation Sans" fill="#333">0</text><path d="M2 12.5 H10 M7.5 10 L10 12.5 L7.5 15" fill="none" stroke="#2b7bc0" stroke-width="1.1"/></svg>
<svg style="position:absolute;left:863px;top:74px;" width="32" height="24" viewBox="0 0 32 24"><rect x="1" y="1" width="29" height="21" fill="#fff" stroke="#333" stroke-width="1.1"/><rect x="6" y="1.5" width="11" height="6.5" fill="#f27b8b"/><rect x="6" y="8" width="6" height="7" fill="#4a9ee0"/><rect x="6" y="15" width="14" height="6.5" fill="#f27b8b"/><path d="M1 8 H30 M1 15 H30 M6 1 V22 M20 1 V22 M25 1 V22" stroke="#333" stroke-width="0.9"/></svg>
<div style="position:absolute;left:578px;width:600px;text-align:center;top:106px;white-space:nowrap;font-size:12px;line-height:15px;color:#2b2b2b;">Conditional</div>
<div style="position:absolute;left:574px;width:600px;text-align:center;top:122px;white-space:nowrap;font-size:12px;line-height:15px;color:#2b2b2b;">Formatting</div>
<svg style="position:absolute;left:904px;top:126px;" width="8" height="6" viewBox="0 0 8 6"><path d="M1 1 L4 4 L7 1" fill="none" stroke="#444" stroke-width="1.1"/></svg>
<svg style="position:absolute;left:929px;top:74px;" width="32" height="28" viewBox="0 0 32 28"><rect x="1" y="1" width="28" height="22" fill="#fff" stroke="#333" stroke-width="1.1"/><rect x="11" y="8" width="18" height="15" fill="#7fb6ea"/><path d="M1 8 H29 M1 15.5 H29 M10.5 1 V23 M20 1 V23" stroke="#333" stroke-width="0.9"/><path d="M30 4 L18 18" stroke="#2b7bc0" stroke-width="2.6"/><path d="M16 17 C13 19 12 23 8 25 C13 26 18 24 19 20 Z" fill="#2b7bc0"/></svg>
<div style="position:absolute;left:644px;width:600px;text-align:center;top:106px;white-space:nowrap;font-size:12px;line-height:15px;color:#2b2b2b;">Format as</div>
<div style="position:absolute;left:638px;width:600px;text-align:center;top:122px;white-space:nowrap;font-size:12px;line-height:15px;color:#2b2b2b;">Table</div>
<svg style="position:absolute;left:954px;top:126px;" width="8" height="6" viewBox="0 0 8 6"><path d="M1 1 L4 4 L7 1" fill="none" stroke="#444" stroke-width="1.1"/></svg>
<div style="position:absolute;left:974px;top:71px;width:548px;height:61px;background:#fff;border:1px solid #d6d4d2"></div>
<div style="position:absolute;left:983px;top:79px;white-space:nowrap;font-family:'Liberation Serif',serif;font-size:13px;line-height:15px;color:#111;-webkit-text-stroke:0.1px #111">Normal 2</div>
<div style="position:absolute;left:1089px;top:79px;white-space:nowrap;font-family:'Liberation Serif',serif;font-size:13px;line-height:15px;color:#111;-webkit-text-stroke:0.1px #111">Normal 3</div>
<div style="position:absolute;left:1195px;top:79px;white-space:nowrap;font-family:'Liberation Serif',serif;font-size:13px;line-height:15px;color:#111;-webkit-text-stroke:0.1px #111">Normal 4</div>
<div style="position:absolute;left:1294px;top:73px;width:107px;height:28px;background:#fff;border:1px solid #9a9a9a;box-shadow:inset 0 0 0 1px #fff, inset 0 0 0 2px #c8c8c8"></div>
<div style="position:absolute;left:1301px;top:78px;white-space:nowrap;font-size:14px;line-height:17px;color:#222">Normal</div>
<div style="position:absolute;left:1403px;top:76px;width:100px;height:22px;background:#ffc7ce"></div>
<div style="position:absolute;left:1407px;top:78px;white-space:nowrap;font-size:14px;line-height:17px;color:#9c0006">Bad</div>
<div style="position:absolute;left:979px;top:104px;width:100px;height:22px;background:#c6efce"></div>
<div style="position:absolute;left:983px;top:106px;white-space:nowrap;font-size:14px;line-height:17px;color:#006100">Good</div>
<div style="position:absolute;left:1085px;top:104px;width:100px;height:22px;background:#ffeb9c"></div>
<div style="position:absolute;left:1089px;top:106px;white-space:nowrap;font-size:14px;line-height:17px;color:#9c5700">Neutral</div>
<div style="position:absolute;left:1191px;top:104px;width:100px;height:22px;background:#f2f2f2;border:1px solid #7f7f7f"></div>
<div style="position:absolute;left:1195px;top:106px;white-space:nowrap;font-size:13.5px;line-height:17px;color:#f08a24;font-weight:bold">Calculation</div>
<div style="position:absolute;left:1297px;top:104px;width:100px;height:22px;background:#a5a5a5;border:2px solid #3f3f3f;box-shadow:inset 0 0 0 1px #d8d8d8"></div>
<div style="position:absolute;left:1302px;top:106px;white-space:nowrap;font-size:13.5px;line-height:17px;color:#fff;font-weight:bold">Check Cell</div>
<div style="position:absolute;left:1407px;top:106px;white-space:nowrap;font-size:13.5px;line-height:17px;color:#7f7f7f;font-style:italic">Explanatory ...</div>
<div style="position:absolute;left:1508px;top:71px;width:14px;height:61px;background:#f4f2f1"></div>
<div style="position:absolute;left:1508px;top:71px;width:14px;height:20px;background:#fff;border:1px solid #d6d4d2"></div>
<div style="position:absolute;left:1508px;top:92px;width:14px;height:19px;background:#fff;border:1px solid #c8c6c4"></div>
<div style="position:absolute;left:1508px;top:112px;width:14px;height:20px;background:#fff;border:1px solid #c8c6c4"></div>
<svg style="position:absolute;left:1511px;top:77px;" width="8" height="6" viewBox="0 0 8 6"><path d="M1 5 L4 2 L7 5" fill="none" stroke="#bbb" stroke-width="1"/></svg>
<svg style="position:absolute;left:1511px;top:98px;" width="8" height="6" viewBox="0 0 8 6"><path d="M1 1 L4 4 L7 1" fill="none" stroke="#333" stroke-width="1.1"/></svg>
<svg style="position:absolute;left:1511px;top:116px;" width="8" height="10" viewBox="0 0 8 10"><path d="M1 1.5 H7" stroke="#333" stroke-width="1"/><path d="M1 4 L4 7 L7 4" fill="none" stroke="#333" stroke-width="1.1"/></svg>
<svg style="position:absolute;left:1546px;top:74px;" width="34" height="24" viewBox="0 0 34 24"><rect x="1" y="1" width="28" height="21" fill="#f6f6f6" stroke="#aaa" stroke-width="1"/><path d="M1 8 H29 M1 15 H29 M10 1 V22 M19 1 V22" stroke="#aaa" stroke-width="0.9"/><rect x="10" y="8" width="22" height="7" fill="#cfcfcf"/><path d="M14 11.5 H1 M4.5 8 L1 11.5 L4.5 15" fill="none" stroke="#aaa" stroke-width="1.2"/></svg>
<div style="position:absolute;left:1262px;width:600px;text-align:center;top:106px;white-space:nowrap;font-size:12px;line-height:15px;color:#2b2b2b;">Insert</div>
<svg style="position:absolute;left:1557px;top:125px;" width="8" height="6" viewBox="0 0 8 6"><path d="M1 1 L4 4 L7 1" fill="none" stroke="#444" stroke-width="1.1"/></svg>
<svg style="position:absolute;left:1588px;top:74px;" width="34" height="24" viewBox="0 0 34 24"><rect x="1" y="1" width="28" height="21" fill="#fff" stroke="#333" stroke-width="1.1"/><path d="M1 8 H29 M1 15 H29 M10 1 V22 M19 1 V22" stroke="#333" stroke-width="0.9"/><rect x="5" y="8.5" width="16" height="6" fill="#4a9ee0"/><path d="M20 7 L31 20 M31 7 L20 20" stroke="#e0303b" stroke-width="1.3"/></svg>
<div style="position:absolute;left:1304px;width:600px;text-align:center;top:106px;white-space:nowrap;font-size:12px;line-height:15px;color:#2b2b2b;">Delete</div>
<svg style="position:absolute;left:1599px;top:125px;" width="8" height="6" viewBox="0 0 8 6"><path d="M1 1 L4 4 L7 1" fill="none" stroke="#444" stroke-width="1.1"/></svg>
<svg style="position:absolute;left:1630px;top:68px;" width="32" height="30" viewBox="0 0 32 30"><path d="M6 2.5 H26 M6 1 V4 M26 1 V4" stroke="#333" stroke-width="1"/><rect x="2" y="7" width="28" height="21" fill="#fff" stroke="#333" stroke-width="1.1"/><path d="M2 14 H30 M2 21 H30 M8 7 V28 M24 7 V28" stroke="#333" stroke-width="0.9"/><rect x="8.5" y="14.5" width="15" height="6" fill="#4a9ee0"/></svg>
<div style="position:absolute;left:1346px;width:600px;text-align:center;top:106px;white-space:nowrap;font-size:12px;line-height:15px;color:#2b2b2b;">Format</div>
<svg style="position:absolute;left:1641px;top:125px;" width="8" height="6" viewBox="0 0 8 6"><path d="M1 1 L4 4 L7 1" fill="none" stroke="#444" stroke-width="1.1"/></svg>
<svg style="position:absolute;left:1688px;top:70px;" width="14" height="16" viewBox="0 0 14 16"><path d="M12 2 H1.5 L7 8 L1.5 14 H12" fill="none" stroke="#333" stroke-width="1.2"/></svg>
<div style="position:absolute;left:1706px;top:72px;white-space:nowrap;font-size:12px;line-height:15px;color:#2b2b2b;">AutoSum</div>
<svg style="position:absolute;left:1765px;top:75px;" width="8" height="6" viewBox="0 0 8 6"><path d="M1 1 L4 4 L7 1" fill="none" stroke="#444" stroke-width="1.1"/></svg>
<svg style="position:absolute;left:1686px;top:94px;" width="18" height="16" viewBox="0 0 18 16"><rect x="1" y="1" width="16" height="14" fill="#fff" stroke="#333" stroke-width="1.1"/><path d="M1 4 H17" stroke="#333" stroke-width="1"/><path d="M9 6 V12 M6.5 9.5 L9 12 L11.5 9.5" fill="none" stroke="#2b7bc0" stroke-width="1.1"/></svg>
<div style="position:absolute;left:1706px;top:95px;white-space:nowrap;font-size:12px;line-height:15px;color:#2b2b2b;">Fill</div>
<svg style="position:absolute;left:1723px;top:98px;" width="8" height="6" viewBox="0 0 8 6"><path d="M1 1 L4 4 L7 1" fill="none" stroke="#444" stroke-width="1.1"/></svg>
<svg style="position:absolute;left:1686px;top:116px;" width="20" height="19" viewBox="0 0 20 19"><path d="M2 11 L11 2 L18 9 L9 18 Z" fill="#e8c8ef" stroke="#a13fb6" stroke-width="1.2"/><path d="M5.5 7.5 L12.5 14.5" stroke="#a13fb6" stroke-width="1.1"/><path d="M2 11 L9 18 L5.5 14.5 Z" fill="#a13fb6"/></svg>
<div style="position:absolute;left:1706px;top:118px;white-space:nowrap;font-size:12px;line-height:15px;color:#2b2b2b;">Clear</div>
<svg style="position:absolute;left:1736px;top:121px;" width="8" height="6" viewBox="0 0 8 6"><path d="M1 1 L4 4 L7 1" fill="none" stroke="#444" stroke-width="1.1"/></svg>
<svg style="position:absolute;left:1784px;top:72px;" width="32" height="28" viewBox="0 0 32 28"><text x="0" y="12" font-size="13" font-family="Liberation Sans" fill="#2b7bc0">A</text><text x="0" y="26" font-size="13" font-family="Liberation Sans" fill="#333">Z</text><path d="M13 6 H29 L23 13 V20 L19 18 V13 Z" fill="#fff" stroke="#333" stroke-width="1.2"/></svg>
<div style="position:absolute;left:1500px;width:600px;text-align:center;top:106px;white-space:nowrap;font-size:12px;line-height:15px;color:#2b2b2b;">Sort &amp;</div>
<div style="position:absolute;left:1494px;width:600px;text-align:center;top:122px;white-space:nowrap;font-size:12px;line-height:15px;color:#2b2b2b;">Filter</div>
<svg style="position:absolute;left:1811px;top:126px;" width="8" height="6" viewBox="0 0 8 6"><path d="M1 1 L4 4 L7 1" fill="none" stroke="#444" stroke-width="1.1"/></svg>
<svg style="position:absolute;left:1828px;top:70px;" width="32" height="32" viewBox="0 0 32 32"><circle cx="20" cy="12" r="9.5" fill="#fff" stroke="#333" stroke-width="1.3"/><path d="M13.5 19 L2 30" stroke="#333" stroke-width="1.3"/></svg>
<div style="position:absolute;left:1543px;width:600px;text-align:center;top:106px;white-space:nowrap;font-size:12px;line-height:15px;color:#2b2b2b;">Find &amp;</div>
<div style="position:absolute;left:1537px;width:600px;text-align:center;top:122px;white-space:nowrap;font-size:12px;line-height:15px;color:#2b2b2b;">Select</div>
<svg style="position:absolute;left:1856px;top:126px;" width="8" height="6" viewBox="0 0 8 6"><path d="M1 1 L4 4 L7 1" fill="none" stroke="#444" stroke-width="1.1"/></svg>
<div style="position:absolute;left:0px;top:160px;width:1920px;height:10px;background:linear-gradient(#d2d2d2,#e6e6e6)"></div>
<div style="position:absolute;left:5px;top:171px;width:102px;height:26px;background:#fff;border:1px solid #c6c6c6"></div>
<div style="position:absolute;left:12px;top:177px;white-space:nowrap;font-size:13px;line-height:16px;color:#333">K1</div>
<svg style="position:absolute;left:92px;top:180px;" width="9" height="6" viewBox="0 0 9 6"><path d="M0.5 0.5 H8.5 L4.5 5 Z" fill="#666"/></svg>
<div style="position:absolute;left:121px;top:177px;width:2px;height:2px;background:#9a9a9a"></div>
<div style="position:absolute;left:121px;top:184px;width:2px;height:2px;background:#9a9a9a"></div>
<div style="position:absolute;left:121px;top:190px;width:2px;height:2px;background:#9a9a9a"></div>
<div style="position:absolute;left:137px;top:171px;width:110px;height:26px;background:#fff;border:1px solid #c6c6c6"></div>
<svg style="position:absolute;left:149px;top:178px;" width="13" height="13" viewBox="0 0 13 13"><path d="M1.5 1.5 L11.5 11.5 M11.5 1.5 L1.5 11.5" stroke="#b0b0b0" stroke-width="1.2"/></svg>
<svg style="position:absolute;left:185px;top:178px;" width="15" height="13" viewBox="0 0 15 13"><path d="M1.5 7 L5.5 11 L13.5 2" fill="none" stroke="#b8b8b8" stroke-width="1.6"/></svg>
<div style="position:absolute;left:222px;top:175px;white-space:nowrap;font-family:'Liberation Serif',serif;font-size:15px;line-height:17px;color:#444;font-weight:bold"><i>f</i><span style="font-size:10px">x</span></div>
<div style="position:absolute;left:250px;top:171px;width:1666px;height:46px;background:#fff;border:1px solid #c6c6c6"></div>
<svg style="position:absolute;left:1899px;top:177px;" width="12" height="8" viewBox="0 0 12 8"><path d="M1.5 6.5 L6 2 L10.5 6.5" fill="none" stroke="#555" stroke-width="1.3"/></svg></body></html>
